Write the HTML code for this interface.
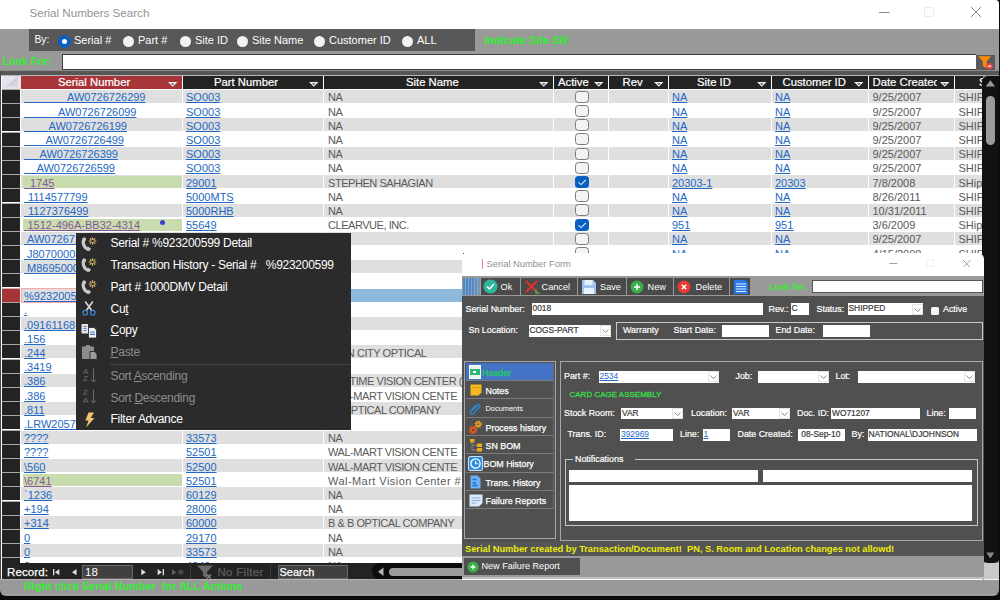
<!DOCTYPE html><html><head><meta charset="utf-8"><title>Serial Numbers Search</title><style>
html,body{margin:0;padding:0;}
body{width:1000px;height:600px;overflow:hidden;background:#0b0b0b;font-family:"Liberation Sans",sans-serif;position:relative;}
div,span,a{box-sizing:border-box;}
.a{position:absolute;}
.t{position:absolute;white-space:nowrap;}
#win{position:absolute;left:0;top:0;width:999.2px;height:595.5px;background:#999;border-radius:0 4px 6px 6px;overflow:hidden;}
#tbar{position:absolute;left:0;top:0;width:1000px;height:29px;background:#fff;}
.lnk{color:#2368c4;text-decoration:underline;}
.vis{color:#86589b;text-decoration:underline;}
.g{color:#5a5a5a;}
.cell{position:absolute;white-space:nowrap;font-size:11px;height:14.2px;line-height:14.2px;overflow:hidden;}
.hd{position:absolute;top:75.8px;height:12.9px;background:#232323;color:#fff;font-size:11.3px;line-height:13.6px;text-align:left;-webkit-text-stroke:0.2px #fff;white-space:nowrap;overflow:hidden;}
.hd i{position:absolute;right:3.5px;top:6.3px;width:10px;height:5px;line-height:0;display:block;}
.cb{position:absolute;width:13.500px;height:12px;border:1px solid #7a7a7a;border-radius:3.500px;background:#f3f3f3;}
.cbc{position:absolute;width:13.500px;height:12px;border-radius:3.500px;background:#0a60c0;}
.mi{position:absolute;left:110.5px;color:#fff;font-size:12px;letter-spacing:-0.28px;white-space:nowrap;height:22px;line-height:22px;}
.mi.d{color:#8c8c8c;}
.fl{position:absolute;color:#fff;-webkit-text-stroke:0.2px #fff;font-size:8.9px;white-space:nowrap;height:12px;line-height:12px;}
.fi{position:absolute;background:#fff;font-size:8.4px;color:#3a3a3a;-webkit-text-stroke:0.2px #3a3a3a;white-space:nowrap;overflow:hidden;padding-left:1px;}
.tab{position:absolute;left:465.5px;width:88px;height:18.35px;border-bottom:1px solid #7c7c7c;border-right:1px solid #6a6a6a;color:#fff;font-size:8.9px;-webkit-text-stroke:0.25px #fff;line-height:20.4px;white-space:nowrap;}
.tbtn{position:absolute;top:278px;height:17px;background:#4a4a4a;color:#fff;font-size:9.2px;line-height:18.500px;white-space:nowrap;}
</style></head><body>
<div id="win">
<div id="tbar"></div>
<div class="t" style="left:29.5px;top:5px;font-size:11.6px;line-height:16px;color:#929292;">Serial Numbers Search</div>
<svg class="a" style="left:870px;top:0" width="130" height="29" viewBox="0 0 130 29"><path d="M9 12.5h10.500" stroke="#8a8a8a" stroke-width="1" fill="none"/><rect x="54.5" y="7.5" width="9" height="9" rx="1" stroke="#ebebeb" fill="none"/><path d="M101 7l10 10M111 7l-10 10" stroke="#8a8a8a" stroke-width="1" fill="none"/></svg>
<div class="a" style="left:29px;top:29px;width:446px;height:22px;background:#585858;"></div>
<div class="t" style="left:34.500px;top:33px;font-size:10.300px;line-height:14px;color:#fff;">By:</div>
<div class="a" style="left:58px;top:34.500px;width:13px;height:13px;border-radius:6.500px;background:#fff;border:4px solid #0a5fc4;"></div>
<div class="t" style="left:74px;top:33px;font-size:11px;line-height:14px;color:#fff;">Serial #</div>
<div class="a" style="left:122.5px;top:35.5px;width:11px;height:11px;border-radius:6px;background:#f2f2f2;"></div>
<div class="t" style="left:138px;top:33px;font-size:11px;line-height:14px;color:#fff;">Part #</div>
<div class="a" style="left:179.5px;top:35.5px;width:11px;height:11px;border-radius:6px;background:#f2f2f2;"></div>
<div class="t" style="left:195px;top:33px;font-size:11px;line-height:14px;color:#fff;">Site ID</div>
<div class="a" style="left:236.5px;top:35.5px;width:11px;height:11px;border-radius:6px;background:#f2f2f2;"></div>
<div class="t" style="left:252px;top:33px;font-size:11px;line-height:14px;color:#fff;">Site Name</div>
<div class="a" style="left:313.5px;top:35.5px;width:11px;height:11px;border-radius:6px;background:#f2f2f2;"></div>
<div class="t" style="left:329px;top:33px;font-size:11px;line-height:14px;color:#fff;">Customer ID</div>
<div class="a" style="left:401.5px;top:35.5px;width:11px;height:11px;border-radius:6px;background:#f2f2f2;"></div>
<div class="t" style="left:417px;top:33px;font-size:11px;line-height:14px;color:#fff;">ALL</div>
<div class="t" style="left:484.5px;top:33px;font-size:11px;line-height:14px;color:#2ef02e;font-weight:bold;font-style:italic;">Indicate Site SN</div>
<div class="t" style="left:2.5px;top:53.5px;font-size:10.6px;line-height:15px;color:#33f033;font-weight:bold;">Look For:</div>
<div class="a" style="left:62px;top:54.4px;width:913.5px;height:15.6px;background:#fff;border:1px solid #3c3c3c;border-right:none;"></div>
<div class="a" style="left:976px;top:55px;width:19px;height:14.5px;background:#5a5a5a;"></div>
<svg class="a" style="left:976px;top:55px" width="19" height="15" viewBox="0 0 19 15"><path d="M2.300 1.300h13l-4.600 5v7l-3.800-2.300v-4.700z" fill="#fb8c04"/><circle cx="13.600" cy="11.200" r="3.100" fill="#ea4440"/><rect x="11.900" y="10.600" width="3.400" height="1.200" fill="#fff"/></svg>
<div class="a" style="left:0;top:70px;width:1000px;height:1px;background:#8c8c8c;"></div>
<div class="a" style="left:0;top:71px;width:1000px;height:3.5px;background:#575757;"></div>
<div class="a" style="left:0;top:71px;width:1.300px;height:508.500px;background:#484848;"></div>
<div class="a" style="left:1.300px;top:74.5px;width:981.700px;height:505px;background:#fff;border-top:1.3px solid #b4b4b4;"></div>
<div class="hd" style="left:21px;width:160.5px;background:#a63439;"><span style="position:absolute;left:37px;top:0;">Serial Number</span><i><svg width="10" height="5" viewBox="0 0 10 5"><path d="M0 0h9.500l-4.750 4.700z" fill="#f0f0f0"/><path d="M3 1.400h3.500l-1.750 1.700z" fill="#2a2a2a"/></svg></i></div>
<div class="hd" style="left:183px;width:139.5px;background:#232323;"><span style="position:absolute;left:31px;top:0;">Part Number</span><i><svg width="10" height="5" viewBox="0 0 10 5"><path d="M0 0h9.500l-4.750 4.700z" fill="#f0f0f0"/><path d="M3 1.400h3.500l-1.750 1.700z" fill="#2a2a2a"/></svg></i></div>
<div class="hd" style="left:324px;width:228.5px;background:#232323;"><span style="position:absolute;left:82px;top:0;">Site Name</span><i><svg width="10" height="5" viewBox="0 0 10 5"><path d="M0 0h9.500l-4.750 4.700z" fill="#f0f0f0"/><path d="M3 1.400h3.500l-1.750 1.700z" fill="#2a2a2a"/></svg></i></div>
<div class="hd" style="left:554px;width:53.5px;background:#232323;"><span style="position:absolute;left:4px;top:0;">Active</span><i><svg width="10" height="5" viewBox="0 0 10 5"><path d="M0 0h9.500l-4.750 4.700z" fill="#f0f0f0"/><path d="M3 1.400h3.500l-1.750 1.700z" fill="#2a2a2a"/></svg></i></div>
<div class="hd" style="left:609px;width:58.5px;background:#232323;"><span style="position:absolute;left:13.5px;top:0;">Rev</span><i><svg width="10" height="5" viewBox="0 0 10 5"><path d="M0 0h9.500l-4.750 4.700z" fill="#f0f0f0"/><path d="M3 1.400h3.500l-1.750 1.700z" fill="#2a2a2a"/></svg></i></div>
<div class="hd" style="left:669px;width:101.5px;background:#232323;"><span style="position:absolute;left:28px;top:0;">Site ID</span><i><svg width="10" height="5" viewBox="0 0 10 5"><path d="M0 0h9.500l-4.750 4.700z" fill="#f0f0f0"/><path d="M3 1.400h3.500l-1.750 1.700z" fill="#2a2a2a"/></svg></i></div>
<div class="hd" style="left:772px;width:95.5px;background:#232323;"><span style="position:absolute;left:10.5px;top:0;">Customer ID</span><i><svg width="10" height="5" viewBox="0 0 10 5"><path d="M0 0h9.500l-4.750 4.700z" fill="#f0f0f0"/><path d="M3 1.400h3.500l-1.750 1.700z" fill="#2a2a2a"/></svg></i></div>
<div class="hd" style="left:869px;width:84.5px;background:#232323;"><span style="position:absolute;left:3.5px;top:0;width:64.5px;overflow:hidden;">Date Created</span><i><svg width="10" height="5" viewBox="0 0 10 5"><path d="M0 0h9.500l-4.750 4.700z" fill="#f0f0f0"/><path d="M3 1.400h3.500l-1.750 1.700z" fill="#2a2a2a"/></svg></i></div>
<div class="hd" style="left:955px;width:27.5px;background:#232323;"><span style="position:absolute;left:24px;top:0;">Status</span></div>
<div class="a" style="left:1.5px;top:75.8px;width:19px;height:12.9px;background:#e4e4ea;"></div>
<svg class="a" style="left:2px;top:75.8px" width="18" height="13" viewBox="0 0 18 13"><path d="M15.500 1.500v9h-10z" fill="#d4d4da"/><path d="M4.500 11l11.500-10" stroke="#b4c6e4" stroke-width="1" fill="none"/></svg>
<div class="a" style="left:21px;top:90.00px;width:161px;height:13.00px;background:#dfdfdf;"></div>
<div class="a" style="left:183px;top:90.00px;width:140px;height:13.00px;background:#dfdfdf;"></div>
<div class="a" style="left:324px;top:90.00px;width:229px;height:13.00px;background:#dfdfdf;"></div>
<div class="a" style="left:554px;top:90.00px;width:54px;height:13.00px;background:#dfdfdf;"></div>
<div class="a" style="left:609px;top:90.00px;width:59px;height:13.00px;background:#dfdfdf;"></div>
<div class="a" style="left:669px;top:90.00px;width:102px;height:13.00px;background:#dfdfdf;"></div>
<div class="a" style="left:772px;top:90.00px;width:96px;height:13.00px;background:#dfdfdf;"></div>
<div class="a" style="left:869px;top:90.00px;width:85px;height:13.00px;background:#dfdfdf;"></div>
<div class="a" style="left:955px;top:90.00px;width:27px;height:13.00px;background:#dfdfdf;"></div>
<div class="a" style="left:2px;top:89.00px;width:18.3px;height:14.20px;background:#232323;border-top:1px solid #a8a8a8;"></div>
<div class="cell" style="left:24px;top:90.30px;width:157px;"><span class="lnk"><span style="letter-spacing:39.94px;">&nbsp;</span>AW0726726299</span></div>
<div class="cell" style="left:186px;top:90.30px;width:136px;"><span class="lnk">SO003</span></div>
<div class="cell g" style="left:328px;top:90.30px;width:224px;letter-spacing:-0.45px;">NA</div>
<div class="cb" style="left:575.2px;top:90.80px;"></div>
<div class="cell" style="left:672px;top:90.30px;width:98px;"><span class="lnk">NA</span></div>
<div class="cell" style="left:775px;top:90.30px;width:92px;"><span class="lnk">NA</span></div>
<div class="cell g" style="left:872.5px;top:90.30px;width:81px;">9/25/2007</div>
<div class="cell g" style="left:958.5px;top:90.30px;width:24px;">SHIP</div>
<div class="a" style="left:21px;top:104.00px;width:161px;height:13.00px;background:#fff;"></div>
<div class="a" style="left:183px;top:104.00px;width:140px;height:13.00px;background:#fff;"></div>
<div class="a" style="left:324px;top:104.00px;width:229px;height:13.00px;background:#fff;"></div>
<div class="a" style="left:554px;top:104.00px;width:54px;height:13.00px;background:#fff;"></div>
<div class="a" style="left:609px;top:104.00px;width:59px;height:13.00px;background:#fff;"></div>
<div class="a" style="left:669px;top:104.00px;width:102px;height:13.00px;background:#fff;"></div>
<div class="a" style="left:772px;top:104.00px;width:96px;height:13.00px;background:#fff;"></div>
<div class="a" style="left:869px;top:104.00px;width:85px;height:13.00px;background:#fff;"></div>
<div class="a" style="left:955px;top:104.00px;width:27px;height:13.00px;background:#fff;"></div>
<div class="a" style="left:2px;top:103.00px;width:18.3px;height:14.20px;background:#232323;border-top:1px solid #a8a8a8;"></div>
<div class="cell" style="left:24px;top:104.50px;width:157px;"><span class="lnk"><span style="letter-spacing:30.94px;">&nbsp;</span>AW0726726099</span></div>
<div class="cell" style="left:186px;top:104.50px;width:136px;"><span class="lnk">SO003</span></div>
<div class="cell g" style="left:328px;top:104.50px;width:224px;letter-spacing:-0.45px;">NA</div>
<div class="cb" style="left:575.2px;top:105.00px;"></div>
<div class="cell" style="left:672px;top:104.50px;width:98px;"><span class="lnk">NA</span></div>
<div class="cell" style="left:775px;top:104.50px;width:92px;"><span class="lnk">NA</span></div>
<div class="cell g" style="left:872.5px;top:104.50px;width:81px;">9/25/2007</div>
<div class="cell g" style="left:958.5px;top:104.50px;width:24px;">SHIP</div>
<div class="a" style="left:21px;top:118.00px;width:161px;height:13.00px;background:#dfdfdf;"></div>
<div class="a" style="left:183px;top:118.00px;width:140px;height:13.00px;background:#dfdfdf;"></div>
<div class="a" style="left:324px;top:118.00px;width:229px;height:13.00px;background:#dfdfdf;"></div>
<div class="a" style="left:554px;top:118.00px;width:54px;height:13.00px;background:#dfdfdf;"></div>
<div class="a" style="left:609px;top:118.00px;width:59px;height:13.00px;background:#dfdfdf;"></div>
<div class="a" style="left:669px;top:118.00px;width:102px;height:13.00px;background:#dfdfdf;"></div>
<div class="a" style="left:772px;top:118.00px;width:96px;height:13.00px;background:#dfdfdf;"></div>
<div class="a" style="left:869px;top:118.00px;width:85px;height:13.00px;background:#dfdfdf;"></div>
<div class="a" style="left:955px;top:118.00px;width:27px;height:13.00px;background:#dfdfdf;"></div>
<div class="a" style="left:2px;top:117.00px;width:18.3px;height:14.20px;background:#232323;border-top:1px solid #a8a8a8;"></div>
<div class="cell" style="left:24px;top:118.70px;width:157px;"><span class="lnk"><span style="letter-spacing:21.44px;">&nbsp;</span>AW0726726199</span></div>
<div class="cell" style="left:186px;top:118.70px;width:136px;"><span class="lnk">SO003</span></div>
<div class="cell g" style="left:328px;top:118.70px;width:224px;letter-spacing:-0.45px;">NA</div>
<div class="cb" style="left:575.2px;top:119.20px;"></div>
<div class="cell" style="left:672px;top:118.70px;width:98px;"><span class="lnk">NA</span></div>
<div class="cell" style="left:775px;top:118.70px;width:92px;"><span class="lnk">NA</span></div>
<div class="cell g" style="left:872.5px;top:118.70px;width:81px;">9/25/2007</div>
<div class="cell g" style="left:958.5px;top:118.70px;width:24px;">SHIP</div>
<div class="a" style="left:21px;top:133.00px;width:161px;height:13.00px;background:#fff;"></div>
<div class="a" style="left:183px;top:133.00px;width:140px;height:13.00px;background:#fff;"></div>
<div class="a" style="left:324px;top:133.00px;width:229px;height:13.00px;background:#fff;"></div>
<div class="a" style="left:554px;top:133.00px;width:54px;height:13.00px;background:#fff;"></div>
<div class="a" style="left:609px;top:133.00px;width:59px;height:13.00px;background:#fff;"></div>
<div class="a" style="left:669px;top:133.00px;width:102px;height:13.00px;background:#fff;"></div>
<div class="a" style="left:772px;top:133.00px;width:96px;height:13.00px;background:#fff;"></div>
<div class="a" style="left:869px;top:133.00px;width:85px;height:13.00px;background:#fff;"></div>
<div class="a" style="left:955px;top:133.00px;width:27px;height:13.00px;background:#fff;"></div>
<div class="a" style="left:2px;top:132.00px;width:18.3px;height:14.20px;background:#232323;border-top:1px solid #a8a8a8;"></div>
<div class="cell" style="left:24px;top:132.90px;width:157px;"><span class="lnk"><span style="letter-spacing:18.44px;">&nbsp;</span>AW0726726499</span></div>
<div class="cell" style="left:186px;top:132.90px;width:136px;"><span class="lnk">SO003</span></div>
<div class="cell g" style="left:328px;top:132.90px;width:224px;letter-spacing:-0.45px;">NA</div>
<div class="cb" style="left:575.2px;top:133.40px;"></div>
<div class="cell" style="left:672px;top:132.90px;width:98px;"><span class="lnk">NA</span></div>
<div class="cell" style="left:775px;top:132.90px;width:92px;"><span class="lnk">NA</span></div>
<div class="cell g" style="left:872.5px;top:132.90px;width:81px;">9/25/2007</div>
<div class="cell g" style="left:958.5px;top:132.90px;width:24px;">SHIP</div>
<div class="a" style="left:21px;top:147.00px;width:161px;height:13.00px;background:#dfdfdf;"></div>
<div class="a" style="left:183px;top:147.00px;width:140px;height:13.00px;background:#dfdfdf;"></div>
<div class="a" style="left:324px;top:147.00px;width:229px;height:13.00px;background:#dfdfdf;"></div>
<div class="a" style="left:554px;top:147.00px;width:54px;height:13.00px;background:#dfdfdf;"></div>
<div class="a" style="left:609px;top:147.00px;width:59px;height:13.00px;background:#dfdfdf;"></div>
<div class="a" style="left:669px;top:147.00px;width:102px;height:13.00px;background:#dfdfdf;"></div>
<div class="a" style="left:772px;top:147.00px;width:96px;height:13.00px;background:#dfdfdf;"></div>
<div class="a" style="left:869px;top:147.00px;width:85px;height:13.00px;background:#dfdfdf;"></div>
<div class="a" style="left:955px;top:147.00px;width:27px;height:13.00px;background:#dfdfdf;"></div>
<div class="a" style="left:2px;top:146.00px;width:18.3px;height:14.20px;background:#232323;border-top:1px solid #a8a8a8;"></div>
<div class="cell" style="left:24px;top:147.10px;width:157px;"><span class="lnk"><span style="letter-spacing:12.44px;">&nbsp;</span>AW0726726399</span></div>
<div class="cell" style="left:186px;top:147.10px;width:136px;"><span class="lnk">SO003</span></div>
<div class="cell g" style="left:328px;top:147.10px;width:224px;letter-spacing:-0.45px;">NA</div>
<div class="cb" style="left:575.2px;top:147.60px;"></div>
<div class="cell" style="left:672px;top:147.10px;width:98px;"><span class="lnk">NA</span></div>
<div class="cell" style="left:775px;top:147.10px;width:92px;"><span class="lnk">NA</span></div>
<div class="cell g" style="left:872.5px;top:147.10px;width:81px;">9/25/2007</div>
<div class="cell g" style="left:958.5px;top:147.10px;width:24px;">SHIP</div>
<div class="a" style="left:21px;top:161.00px;width:161px;height:13.00px;background:#fff;"></div>
<div class="a" style="left:183px;top:161.00px;width:140px;height:13.00px;background:#fff;"></div>
<div class="a" style="left:324px;top:161.00px;width:229px;height:13.00px;background:#fff;"></div>
<div class="a" style="left:554px;top:161.00px;width:54px;height:13.00px;background:#fff;"></div>
<div class="a" style="left:609px;top:161.00px;width:59px;height:13.00px;background:#fff;"></div>
<div class="a" style="left:669px;top:161.00px;width:102px;height:13.00px;background:#fff;"></div>
<div class="a" style="left:772px;top:161.00px;width:96px;height:13.00px;background:#fff;"></div>
<div class="a" style="left:869px;top:161.00px;width:85px;height:13.00px;background:#fff;"></div>
<div class="a" style="left:955px;top:161.00px;width:27px;height:13.00px;background:#fff;"></div>
<div class="a" style="left:2px;top:160.00px;width:18.3px;height:14.20px;background:#232323;border-top:1px solid #a8a8a8;"></div>
<div class="cell" style="left:24px;top:161.30px;width:157px;"><span class="lnk"><span style="letter-spacing:9.44px;">&nbsp;</span>AW0726726599</span></div>
<div class="cell" style="left:186px;top:161.30px;width:136px;"><span class="lnk">SO003</span></div>
<div class="cell g" style="left:328px;top:161.30px;width:224px;letter-spacing:-0.45px;">NA</div>
<div class="cb" style="left:575.2px;top:161.80px;"></div>
<div class="cell" style="left:672px;top:161.30px;width:98px;"><span class="lnk">NA</span></div>
<div class="cell" style="left:775px;top:161.30px;width:92px;"><span class="lnk">NA</span></div>
<div class="cell g" style="left:872.5px;top:161.30px;width:81px;">9/25/2007</div>
<div class="cell g" style="left:958.5px;top:161.30px;width:24px;">SHIP</div>
<div class="a" style="left:21px;top:175.00px;width:161px;height:13.00px;background:#dfdfdf;"></div>
<div class="a" style="left:23px;top:175.50px;width:159px;height:12.00px;background:#c9dcae;"></div>
<div class="a" style="left:183px;top:175.00px;width:140px;height:13.00px;background:#dfdfdf;"></div>
<div class="a" style="left:324px;top:175.00px;width:229px;height:13.00px;background:#dfdfdf;"></div>
<div class="a" style="left:554px;top:175.00px;width:54px;height:13.00px;background:#dfdfdf;"></div>
<div class="a" style="left:609px;top:175.00px;width:59px;height:13.00px;background:#dfdfdf;"></div>
<div class="a" style="left:669px;top:175.00px;width:102px;height:13.00px;background:#dfdfdf;"></div>
<div class="a" style="left:772px;top:175.00px;width:96px;height:13.00px;background:#dfdfdf;"></div>
<div class="a" style="left:869px;top:175.00px;width:85px;height:13.00px;background:#dfdfdf;"></div>
<div class="a" style="left:955px;top:175.00px;width:27px;height:13.00px;background:#dfdfdf;"></div>
<div class="a" style="left:2px;top:174.00px;width:18.3px;height:14.20px;background:#232323;border-top:1px solid #a8a8a8;"></div>
<div class="cell" style="left:24px;top:175.50px;width:157px;"><span class="vis"><span style="letter-spacing:2.94px;">&nbsp;</span>1745</span></div>
<div class="cell" style="left:186px;top:175.50px;width:136px;"><span class="lnk">29001</span></div>
<div class="cell g" style="left:328px;top:175.50px;width:224px;letter-spacing:-0.45px;">STEPHEN SAHAGIAN</div>
<div class="cbc" style="left:575.2px;top:176.00px;"></div><svg class="a" style="left:575.2px;top:176.00px" width="14" height="12" viewBox="0 0 14 12"><path d="M3.500 6.300l2.600 2.300l4.600-4.600" stroke="#d4e6f8" stroke-width="1.100" fill="none"/></svg>
<div class="cell" style="left:672px;top:175.50px;width:98px;"><span class="lnk">20303-1</span></div>
<div class="cell" style="left:775px;top:175.50px;width:92px;"><span class="lnk">20303</span></div>
<div class="cell g" style="left:872.5px;top:175.50px;width:81px;">7/8/2008</div>
<div class="cell g" style="left:958.5px;top:175.50px;width:24px;">SHip</div>
<div class="a" style="left:21px;top:189.00px;width:161px;height:13.00px;background:#fff;"></div>
<div class="a" style="left:183px;top:189.00px;width:140px;height:13.00px;background:#fff;"></div>
<div class="a" style="left:324px;top:189.00px;width:229px;height:13.00px;background:#fff;"></div>
<div class="a" style="left:554px;top:189.00px;width:54px;height:13.00px;background:#fff;"></div>
<div class="a" style="left:609px;top:189.00px;width:59px;height:13.00px;background:#fff;"></div>
<div class="a" style="left:669px;top:189.00px;width:102px;height:13.00px;background:#fff;"></div>
<div class="a" style="left:772px;top:189.00px;width:96px;height:13.00px;background:#fff;"></div>
<div class="a" style="left:869px;top:189.00px;width:85px;height:13.00px;background:#fff;"></div>
<div class="a" style="left:955px;top:189.00px;width:27px;height:13.00px;background:#fff;"></div>
<div class="a" style="left:2px;top:188.00px;width:18.3px;height:14.20px;background:#232323;border-top:1px solid #a8a8a8;"></div>
<div class="cell" style="left:24px;top:189.70px;width:157px;"><span class="lnk"><span style="letter-spacing:0.94px;">&nbsp;</span>1114577799</span></div>
<div class="cell" style="left:186px;top:189.70px;width:136px;"><span class="lnk">5000MTS</span></div>
<div class="cell g" style="left:328px;top:189.70px;width:224px;letter-spacing:-0.45px;">NA</div>
<div class="cb" style="left:575.2px;top:190.20px;"></div>
<div class="cell" style="left:672px;top:189.70px;width:98px;"><span class="lnk">NA</span></div>
<div class="cell" style="left:775px;top:189.70px;width:92px;"><span class="lnk">NA</span></div>
<div class="cell g" style="left:872.5px;top:189.70px;width:81px;">8/26/2011</div>
<div class="cell g" style="left:958.5px;top:189.70px;width:24px;">SHIP</div>
<div class="a" style="left:21px;top:204.00px;width:161px;height:13.00px;background:#dfdfdf;"></div>
<div class="a" style="left:183px;top:204.00px;width:140px;height:13.00px;background:#dfdfdf;"></div>
<div class="a" style="left:324px;top:204.00px;width:229px;height:13.00px;background:#dfdfdf;"></div>
<div class="a" style="left:554px;top:204.00px;width:54px;height:13.00px;background:#dfdfdf;"></div>
<div class="a" style="left:609px;top:204.00px;width:59px;height:13.00px;background:#dfdfdf;"></div>
<div class="a" style="left:669px;top:204.00px;width:102px;height:13.00px;background:#dfdfdf;"></div>
<div class="a" style="left:772px;top:204.00px;width:96px;height:13.00px;background:#dfdfdf;"></div>
<div class="a" style="left:869px;top:204.00px;width:85px;height:13.00px;background:#dfdfdf;"></div>
<div class="a" style="left:955px;top:204.00px;width:27px;height:13.00px;background:#dfdfdf;"></div>
<div class="a" style="left:2px;top:203.00px;width:18.3px;height:14.20px;background:#232323;border-top:1px solid #a8a8a8;"></div>
<div class="cell" style="left:24px;top:203.90px;width:157px;"><span class="lnk"><span style="letter-spacing:0.94px;">&nbsp;</span>1127376499</span></div>
<div class="cell" style="left:186px;top:203.90px;width:136px;"><span class="lnk">5000RHB</span></div>
<div class="cell g" style="left:328px;top:203.90px;width:224px;letter-spacing:-0.45px;">NA</div>
<div class="cb" style="left:575.2px;top:204.40px;"></div>
<div class="cell" style="left:672px;top:203.90px;width:98px;"><span class="lnk">NA</span></div>
<div class="cell" style="left:775px;top:203.90px;width:92px;"><span class="lnk">NA</span></div>
<div class="cell g" style="left:872.5px;top:203.90px;width:81px;">10/31/2011</div>
<div class="cell g" style="left:958.5px;top:203.90px;width:24px;">SHIP</div>
<div class="a" style="left:21px;top:218.00px;width:161px;height:13.00px;background:#fff;"></div>
<div class="a" style="left:23px;top:218.50px;width:159px;height:12.00px;background:#c9dcae;"></div>
<div class="a" style="left:183px;top:218.00px;width:140px;height:13.00px;background:#fff;"></div>
<div class="a" style="left:324px;top:218.00px;width:229px;height:13.00px;background:#fff;"></div>
<div class="a" style="left:554px;top:218.00px;width:54px;height:13.00px;background:#fff;"></div>
<div class="a" style="left:609px;top:218.00px;width:59px;height:13.00px;background:#fff;"></div>
<div class="a" style="left:669px;top:218.00px;width:102px;height:13.00px;background:#fff;"></div>
<div class="a" style="left:772px;top:218.00px;width:96px;height:13.00px;background:#fff;"></div>
<div class="a" style="left:869px;top:218.00px;width:85px;height:13.00px;background:#fff;"></div>
<div class="a" style="left:955px;top:218.00px;width:27px;height:13.00px;background:#fff;"></div>
<div class="a" style="left:2px;top:217.00px;width:18.3px;height:14.20px;background:#232323;border-top:1px solid #a8a8a8;"></div>
<div class="cell" style="left:24px;top:218.10px;width:157px;"><span class="vis"><span style="letter-spacing:0.44px;">&nbsp;</span>1512-496A-BB32-4314</span></div>
<div class="cell" style="left:186px;top:218.10px;width:136px;"><span class="lnk">55649</span></div>
<div class="cell g" style="left:328px;top:218.10px;width:224px;letter-spacing:-0.45px;">CLEARVUE, INC.</div>
<div class="cbc" style="left:575.2px;top:218.60px;"></div><svg class="a" style="left:575.2px;top:218.60px" width="14" height="12" viewBox="0 0 14 12"><path d="M3.500 6.300l2.600 2.300l4.600-4.600" stroke="#d4e6f8" stroke-width="1.100" fill="none"/></svg>
<div class="cell" style="left:672px;top:218.10px;width:98px;"><span class="lnk">951</span></div>
<div class="cell" style="left:775px;top:218.10px;width:92px;"><span class="lnk">951</span></div>
<div class="cell g" style="left:872.5px;top:218.10px;width:81px;">3/6/2009</div>
<div class="cell g" style="left:958.5px;top:218.10px;width:24px;">SHip</div>
<div class="a" style="left:21px;top:232.00px;width:161px;height:13.00px;background:#dfdfdf;"></div>
<div class="a" style="left:183px;top:232.00px;width:140px;height:13.00px;background:#dfdfdf;"></div>
<div class="a" style="left:324px;top:232.00px;width:229px;height:13.00px;background:#dfdfdf;"></div>
<div class="a" style="left:554px;top:232.00px;width:54px;height:13.00px;background:#dfdfdf;"></div>
<div class="a" style="left:609px;top:232.00px;width:59px;height:13.00px;background:#dfdfdf;"></div>
<div class="a" style="left:669px;top:232.00px;width:102px;height:13.00px;background:#dfdfdf;"></div>
<div class="a" style="left:772px;top:232.00px;width:96px;height:13.00px;background:#dfdfdf;"></div>
<div class="a" style="left:869px;top:232.00px;width:85px;height:13.00px;background:#dfdfdf;"></div>
<div class="a" style="left:955px;top:232.00px;width:27px;height:13.00px;background:#dfdfdf;"></div>
<div class="a" style="left:2px;top:231.00px;width:18.3px;height:14.20px;background:#232323;border-top:1px solid #a8a8a8;"></div>
<div class="cell" style="left:24px;top:232.30px;width:157px;"><span class="lnk"><span style="letter-spacing:-0.06px;">&nbsp;</span>AW0726726699</span></div>
<div class="cell" style="left:186px;top:232.30px;width:136px;"><span class="lnk">SO003</span></div>
<div class="cell g" style="left:328px;top:232.30px;width:224px;letter-spacing:-0.45px;">NA</div>
<div class="cb" style="left:575.2px;top:232.80px;"></div>
<div class="cell" style="left:672px;top:232.30px;width:98px;"><span class="lnk">NA</span></div>
<div class="cell" style="left:775px;top:232.30px;width:92px;"><span class="lnk">NA</span></div>
<div class="cell g" style="left:872.5px;top:232.30px;width:81px;">9/25/2007</div>
<div class="cell g" style="left:958.5px;top:232.30px;width:24px;">SHIP</div>
<div class="a" style="left:21px;top:246.00px;width:161px;height:13.00px;background:#fff;"></div>
<div class="a" style="left:183px;top:246.00px;width:140px;height:13.00px;background:#fff;"></div>
<div class="a" style="left:324px;top:246.00px;width:229px;height:13.00px;background:#fff;"></div>
<div class="a" style="left:554px;top:246.00px;width:54px;height:13.00px;background:#fff;"></div>
<div class="a" style="left:609px;top:246.00px;width:59px;height:13.00px;background:#fff;"></div>
<div class="a" style="left:669px;top:246.00px;width:102px;height:13.00px;background:#fff;"></div>
<div class="a" style="left:772px;top:246.00px;width:96px;height:13.00px;background:#fff;"></div>
<div class="a" style="left:869px;top:246.00px;width:85px;height:13.00px;background:#fff;"></div>
<div class="a" style="left:955px;top:246.00px;width:27px;height:13.00px;background:#fff;"></div>
<div class="a" style="left:2px;top:245.00px;width:18.3px;height:14.20px;background:#232323;border-top:1px solid #a8a8a8;"></div>
<div class="cell" style="left:24px;top:246.50px;width:157px;"><span class="lnk"><span style="letter-spacing:-0.06px;">&nbsp;</span>J80700008</span></div>
<div class="cell" style="left:186px;top:246.50px;width:136px;"><span class="lnk">5000MTS</span></div>
<div class="cell g" style="left:328px;top:246.50px;width:224px;letter-spacing:-0.45px;">NA</div>
<div class="cb" style="left:575.2px;top:247.00px;"></div>
<div class="cell" style="left:672px;top:246.50px;width:98px;"><span class="lnk">NA</span></div>
<div class="cell" style="left:775px;top:246.50px;width:92px;"><span class="lnk">NA</span></div>
<div class="cell g" style="left:872.5px;top:246.50px;width:81px;">4/15/2008</div>
<div class="cell g" style="left:958.5px;top:246.50px;width:24px;">SHIP</div>
<div class="a" style="left:21px;top:260.00px;width:161px;height:13.00px;background:#dfdfdf;"></div>
<div class="a" style="left:183px;top:260.00px;width:140px;height:13.00px;background:#dfdfdf;"></div>
<div class="a" style="left:324px;top:260.00px;width:229px;height:13.00px;background:#dfdfdf;"></div>
<div class="a" style="left:554px;top:260.00px;width:54px;height:13.00px;background:#dfdfdf;"></div>
<div class="a" style="left:609px;top:260.00px;width:59px;height:13.00px;background:#dfdfdf;"></div>
<div class="a" style="left:669px;top:260.00px;width:102px;height:13.00px;background:#dfdfdf;"></div>
<div class="a" style="left:772px;top:260.00px;width:96px;height:13.00px;background:#dfdfdf;"></div>
<div class="a" style="left:869px;top:260.00px;width:85px;height:13.00px;background:#dfdfdf;"></div>
<div class="a" style="left:955px;top:260.00px;width:27px;height:13.00px;background:#dfdfdf;"></div>
<div class="a" style="left:2px;top:259.00px;width:18.3px;height:14.20px;background:#232323;border-top:1px solid #a8a8a8;"></div>
<div class="cell" style="left:24px;top:260.70px;width:157px;"><span class="lnk"><span style="letter-spacing:-0.06px;">&nbsp;</span>M86950008</span></div>
<div class="cell" style="left:186px;top:260.70px;width:136px;"><span class="lnk">5000MTS</span></div>
<div class="cell g" style="left:328px;top:260.70px;width:224px;letter-spacing:-0.45px;">NA</div>
<div class="cb" style="left:575.2px;top:261.20px;"></div>
<div class="cell" style="left:672px;top:260.70px;width:98px;"><span class="lnk">NA</span></div>
<div class="cell" style="left:775px;top:260.70px;width:92px;"><span class="lnk">NA</span></div>
<div class="cell g" style="left:872.5px;top:260.70px;width:81px;">4/15/2008</div>
<div class="cell g" style="left:958.5px;top:260.70px;width:24px;">SHIP</div>
<div class="a" style="left:21px;top:274.00px;width:161px;height:13.00px;background:#fff;"></div>
<div class="a" style="left:183px;top:274.00px;width:140px;height:13.00px;background:#fff;"></div>
<div class="a" style="left:324px;top:274.00px;width:229px;height:13.00px;background:#fff;"></div>
<div class="a" style="left:554px;top:274.00px;width:54px;height:13.00px;background:#fff;"></div>
<div class="a" style="left:609px;top:274.00px;width:59px;height:13.00px;background:#fff;"></div>
<div class="a" style="left:669px;top:274.00px;width:102px;height:13.00px;background:#fff;"></div>
<div class="a" style="left:772px;top:274.00px;width:96px;height:13.00px;background:#fff;"></div>
<div class="a" style="left:869px;top:274.00px;width:85px;height:13.00px;background:#fff;"></div>
<div class="a" style="left:955px;top:274.00px;width:27px;height:13.00px;background:#fff;"></div>
<div class="a" style="left:2px;top:273.00px;width:18.3px;height:14.20px;background:#232323;border-top:1px solid #a8a8a8;"></div>
<div class="a" style="left:21px;top:289.00px;width:161px;height:13.00px;background:#dfdfdf;"></div>
<div class="a" style="left:183px;top:289.00px;width:140px;height:13.00px;background:#8fb9dc;"></div>
<div class="a" style="left:324px;top:289.00px;width:229px;height:13.00px;background:#8fb9dc;"></div>
<div class="a" style="left:554px;top:289.00px;width:54px;height:13.00px;background:#8fb9dc;"></div>
<div class="a" style="left:609px;top:289.00px;width:59px;height:13.00px;background:#8fb9dc;"></div>
<div class="a" style="left:669px;top:289.00px;width:102px;height:13.00px;background:#8fb9dc;"></div>
<div class="a" style="left:772px;top:289.00px;width:96px;height:13.00px;background:#8fb9dc;"></div>
<div class="a" style="left:869px;top:289.00px;width:85px;height:13.00px;background:#8fb9dc;"></div>
<div class="a" style="left:955px;top:289.00px;width:27px;height:13.00px;background:#8fb9dc;"></div>
<div class="a" style="left:2px;top:288.00px;width:18.3px;height:14.20px;background:#a63439;border-top:1px solid #d8b0b0;"></div>
<div class="cell" style="left:24px;top:289.10px;width:157px;"><span class="lnk"><span style="letter-spacing:-3.06px;">&nbsp;</span>%923200599</span></div>
<div class="cell" style="left:186px;top:289.10px;width:136px;"><span class="lnk">1000DMV</span></div>
<div class="cell g" style="left:328px;top:289.10px;width:224px;letter-spacing:-0.45px;">NA</div>
<div class="cb" style="left:575.2px;top:289.60px;"></div>
<div class="cell" style="left:672px;top:289.10px;width:98px;"><span class="lnk">NA</span></div>
<div class="cell" style="left:775px;top:289.10px;width:92px;"><span class="lnk">NA</span></div>
<div class="cell g" style="left:872.5px;top:289.10px;width:81px;">4/15/2008</div>
<div class="cell g" style="left:958.5px;top:289.10px;width:24px;">SHIP</div>
<div class="a" style="left:21px;top:303.00px;width:161px;height:13.00px;background:#fff;"></div>
<div class="a" style="left:183px;top:303.00px;width:140px;height:13.00px;background:#fff;"></div>
<div class="a" style="left:324px;top:303.00px;width:229px;height:13.00px;background:#fff;"></div>
<div class="a" style="left:554px;top:303.00px;width:54px;height:13.00px;background:#fff;"></div>
<div class="a" style="left:609px;top:303.00px;width:59px;height:13.00px;background:#fff;"></div>
<div class="a" style="left:669px;top:303.00px;width:102px;height:13.00px;background:#fff;"></div>
<div class="a" style="left:772px;top:303.00px;width:96px;height:13.00px;background:#fff;"></div>
<div class="a" style="left:869px;top:303.00px;width:85px;height:13.00px;background:#fff;"></div>
<div class="a" style="left:955px;top:303.00px;width:27px;height:13.00px;background:#fff;"></div>
<div class="a" style="left:2px;top:302.00px;width:18.3px;height:14.20px;background:#232323;border-top:1px solid #a8a8a8;"></div>
<div class="cell" style="left:24px;top:303.30px;width:157px;"><span class="lnk"><span style="letter-spacing:-3.06px;">&nbsp;</span>.</span></div>
<div class="cell" style="left:186px;top:303.30px;width:136px;"><span class="lnk">28006</span></div>
<div class="cell g" style="left:328px;top:303.30px;width:224px;letter-spacing:-0.45px;">NA</div>
<div class="cb" style="left:575.2px;top:303.80px;"></div>
<div class="cell" style="left:672px;top:303.30px;width:98px;"><span class="lnk">NA</span></div>
<div class="cell" style="left:775px;top:303.30px;width:92px;"><span class="lnk">NA</span></div>
<div class="cell g" style="left:958.5px;top:303.30px;width:24px;">SHIP</div>
<div class="a" style="left:21px;top:317.00px;width:161px;height:13.00px;background:#dfdfdf;"></div>
<div class="a" style="left:183px;top:317.00px;width:140px;height:13.00px;background:#dfdfdf;"></div>
<div class="a" style="left:324px;top:317.00px;width:229px;height:13.00px;background:#dfdfdf;"></div>
<div class="a" style="left:554px;top:317.00px;width:54px;height:13.00px;background:#dfdfdf;"></div>
<div class="a" style="left:609px;top:317.00px;width:59px;height:13.00px;background:#dfdfdf;"></div>
<div class="a" style="left:669px;top:317.00px;width:102px;height:13.00px;background:#dfdfdf;"></div>
<div class="a" style="left:772px;top:317.00px;width:96px;height:13.00px;background:#dfdfdf;"></div>
<div class="a" style="left:869px;top:317.00px;width:85px;height:13.00px;background:#dfdfdf;"></div>
<div class="a" style="left:955px;top:317.00px;width:27px;height:13.00px;background:#dfdfdf;"></div>
<div class="a" style="left:2px;top:316.00px;width:18.3px;height:14.20px;background:#232323;border-top:1px solid #a8a8a8;"></div>
<div class="cell" style="left:24px;top:317.50px;width:157px;"><span class="lnk"><span style="letter-spacing:-3.06px;">&nbsp;</span>.09161168</span></div>
<div class="cell" style="left:186px;top:317.50px;width:136px;"><span class="lnk">28006</span></div>
<div class="cell g" style="left:328px;top:317.50px;width:224px;letter-spacing:-0.45px;">NA</div>
<div class="cb" style="left:575.2px;top:318.00px;"></div>
<div class="cell" style="left:672px;top:317.50px;width:98px;"><span class="lnk">NA</span></div>
<div class="cell" style="left:775px;top:317.50px;width:92px;"><span class="lnk">NA</span></div>
<div class="cell g" style="left:958.5px;top:317.50px;width:24px;">SHIP</div>
<div class="a" style="left:21px;top:331.00px;width:161px;height:13.00px;background:#fff;"></div>
<div class="a" style="left:183px;top:331.00px;width:140px;height:13.00px;background:#fff;"></div>
<div class="a" style="left:324px;top:331.00px;width:229px;height:13.00px;background:#fff;"></div>
<div class="a" style="left:554px;top:331.00px;width:54px;height:13.00px;background:#fff;"></div>
<div class="a" style="left:609px;top:331.00px;width:59px;height:13.00px;background:#fff;"></div>
<div class="a" style="left:669px;top:331.00px;width:102px;height:13.00px;background:#fff;"></div>
<div class="a" style="left:772px;top:331.00px;width:96px;height:13.00px;background:#fff;"></div>
<div class="a" style="left:869px;top:331.00px;width:85px;height:13.00px;background:#fff;"></div>
<div class="a" style="left:955px;top:331.00px;width:27px;height:13.00px;background:#fff;"></div>
<div class="a" style="left:2px;top:330.00px;width:18.3px;height:14.20px;background:#232323;border-top:1px solid #a8a8a8;"></div>
<div class="cell" style="left:24px;top:331.70px;width:157px;"><span class="lnk"><span style="letter-spacing:-3.06px;">&nbsp;</span>.156</span></div>
<div class="cell" style="left:186px;top:331.70px;width:136px;"><span class="lnk">28006</span></div>
<div class="cell g" style="left:328px;top:331.70px;width:224px;letter-spacing:-0.45px;">NA</div>
<div class="cb" style="left:575.2px;top:332.20px;"></div>
<div class="cell" style="left:672px;top:331.70px;width:98px;"><span class="lnk">NA</span></div>
<div class="cell" style="left:775px;top:331.70px;width:92px;"><span class="lnk">NA</span></div>
<div class="cell g" style="left:958.5px;top:331.70px;width:24px;">SHIP</div>
<div class="a" style="left:21px;top:345.00px;width:161px;height:13.00px;background:#dfdfdf;"></div>
<div class="a" style="left:183px;top:345.00px;width:140px;height:13.00px;background:#dfdfdf;"></div>
<div class="a" style="left:324px;top:345.00px;width:229px;height:13.00px;background:#dfdfdf;"></div>
<div class="a" style="left:554px;top:345.00px;width:54px;height:13.00px;background:#dfdfdf;"></div>
<div class="a" style="left:609px;top:345.00px;width:59px;height:13.00px;background:#dfdfdf;"></div>
<div class="a" style="left:669px;top:345.00px;width:102px;height:13.00px;background:#dfdfdf;"></div>
<div class="a" style="left:772px;top:345.00px;width:96px;height:13.00px;background:#dfdfdf;"></div>
<div class="a" style="left:869px;top:345.00px;width:85px;height:13.00px;background:#dfdfdf;"></div>
<div class="a" style="left:955px;top:345.00px;width:27px;height:13.00px;background:#dfdfdf;"></div>
<div class="a" style="left:2px;top:344.00px;width:18.3px;height:14.20px;background:#232323;border-top:1px solid #a8a8a8;"></div>
<div class="cell" style="left:24px;top:345.90px;width:157px;"><span class="lnk"><span style="letter-spacing:-3.06px;">&nbsp;</span>.244</span></div>
<div class="cell" style="left:186px;top:345.90px;width:136px;"><span class="lnk">52500</span></div>
<div class="cell g" style="left:328px;top:345.90px;width:224px;letter-spacing:-0.45px;">TWIN CITY OPTICAL</div>
<div class="cb" style="left:575.2px;top:346.40px;"></div>
<div class="cell" style="left:672px;top:345.90px;width:98px;"><span class="lnk">NA</span></div>
<div class="cell" style="left:775px;top:345.90px;width:92px;"><span class="lnk">NA</span></div>
<div class="cell g" style="left:958.5px;top:345.90px;width:24px;">SHIP</div>
<div class="a" style="left:21px;top:360.00px;width:161px;height:13.00px;background:#fff;"></div>
<div class="a" style="left:183px;top:360.00px;width:140px;height:13.00px;background:#fff;"></div>
<div class="a" style="left:324px;top:360.00px;width:229px;height:13.00px;background:#fff;"></div>
<div class="a" style="left:554px;top:360.00px;width:54px;height:13.00px;background:#fff;"></div>
<div class="a" style="left:609px;top:360.00px;width:59px;height:13.00px;background:#fff;"></div>
<div class="a" style="left:669px;top:360.00px;width:102px;height:13.00px;background:#fff;"></div>
<div class="a" style="left:772px;top:360.00px;width:96px;height:13.00px;background:#fff;"></div>
<div class="a" style="left:869px;top:360.00px;width:85px;height:13.00px;background:#fff;"></div>
<div class="a" style="left:955px;top:360.00px;width:27px;height:13.00px;background:#fff;"></div>
<div class="a" style="left:2px;top:359.00px;width:18.3px;height:14.20px;background:#232323;border-top:1px solid #a8a8a8;"></div>
<div class="cell" style="left:24px;top:360.10px;width:157px;"><span class="lnk"><span style="letter-spacing:-3.06px;">&nbsp;</span>.3419</span></div>
<div class="cell" style="left:186px;top:360.10px;width:136px;"><span class="lnk">52500</span></div>
<div class="cb" style="left:575.2px;top:360.60px;"></div>
<div class="cell" style="left:672px;top:360.10px;width:98px;"><span class="lnk">NA</span></div>
<div class="cell" style="left:775px;top:360.10px;width:92px;"><span class="lnk">NA</span></div>
<div class="cell g" style="left:958.5px;top:360.10px;width:24px;">SHIP</div>
<div class="a" style="left:21px;top:374.00px;width:161px;height:13.00px;background:#dfdfdf;"></div>
<div class="a" style="left:183px;top:374.00px;width:140px;height:13.00px;background:#dfdfdf;"></div>
<div class="a" style="left:324px;top:374.00px;width:229px;height:13.00px;background:#dfdfdf;"></div>
<div class="a" style="left:554px;top:374.00px;width:54px;height:13.00px;background:#dfdfdf;"></div>
<div class="a" style="left:609px;top:374.00px;width:59px;height:13.00px;background:#dfdfdf;"></div>
<div class="a" style="left:669px;top:374.00px;width:102px;height:13.00px;background:#dfdfdf;"></div>
<div class="a" style="left:772px;top:374.00px;width:96px;height:13.00px;background:#dfdfdf;"></div>
<div class="a" style="left:869px;top:374.00px;width:85px;height:13.00px;background:#dfdfdf;"></div>
<div class="a" style="left:955px;top:374.00px;width:27px;height:13.00px;background:#dfdfdf;"></div>
<div class="a" style="left:2px;top:373.00px;width:18.3px;height:14.20px;background:#232323;border-top:1px solid #a8a8a8;"></div>
<div class="cell" style="left:24px;top:374.30px;width:157px;"><span class="lnk"><span style="letter-spacing:-3.06px;">&nbsp;</span>.386</span></div>
<div class="cell" style="left:186px;top:374.30px;width:136px;"><span class="lnk">52500</span></div>
<div class="cell g" style="left:328px;top:374.30px;width:224px;letter-spacing:-0.45px;">LIFETIME VISION CENTER (</div>
<div class="cb" style="left:575.2px;top:374.80px;"></div>
<div class="cell" style="left:672px;top:374.30px;width:98px;"><span class="lnk">NA</span></div>
<div class="cell" style="left:775px;top:374.30px;width:92px;"><span class="lnk">NA</span></div>
<div class="cell g" style="left:958.5px;top:374.30px;width:24px;">SHIP</div>
<div class="a" style="left:21px;top:388.00px;width:161px;height:13.00px;background:#fff;"></div>
<div class="a" style="left:183px;top:388.00px;width:140px;height:13.00px;background:#fff;"></div>
<div class="a" style="left:324px;top:388.00px;width:229px;height:13.00px;background:#fff;"></div>
<div class="a" style="left:554px;top:388.00px;width:54px;height:13.00px;background:#fff;"></div>
<div class="a" style="left:609px;top:388.00px;width:59px;height:13.00px;background:#fff;"></div>
<div class="a" style="left:669px;top:388.00px;width:102px;height:13.00px;background:#fff;"></div>
<div class="a" style="left:772px;top:388.00px;width:96px;height:13.00px;background:#fff;"></div>
<div class="a" style="left:869px;top:388.00px;width:85px;height:13.00px;background:#fff;"></div>
<div class="a" style="left:955px;top:388.00px;width:27px;height:13.00px;background:#fff;"></div>
<div class="a" style="left:2px;top:387.00px;width:18.3px;height:14.20px;background:#232323;border-top:1px solid #a8a8a8;"></div>
<div class="cell" style="left:24px;top:388.50px;width:157px;"><span class="lnk"><span style="letter-spacing:-3.06px;">&nbsp;</span>.386</span></div>
<div class="cell" style="left:186px;top:388.50px;width:136px;"><span class="lnk">52500</span></div>
<div class="cell g" style="left:328px;top:388.50px;width:224px;letter-spacing:-0.45px;">WAL-MART VISION CENTE</div>
<div class="cb" style="left:575.2px;top:389.00px;"></div>
<div class="cell" style="left:672px;top:388.50px;width:98px;"><span class="lnk">NA</span></div>
<div class="cell" style="left:775px;top:388.50px;width:92px;"><span class="lnk">NA</span></div>
<div class="cell g" style="left:958.5px;top:388.50px;width:24px;">SHIP</div>
<div class="a" style="left:21px;top:402.00px;width:161px;height:13.00px;background:#dfdfdf;"></div>
<div class="a" style="left:183px;top:402.00px;width:140px;height:13.00px;background:#dfdfdf;"></div>
<div class="a" style="left:324px;top:402.00px;width:229px;height:13.00px;background:#dfdfdf;"></div>
<div class="a" style="left:554px;top:402.00px;width:54px;height:13.00px;background:#dfdfdf;"></div>
<div class="a" style="left:609px;top:402.00px;width:59px;height:13.00px;background:#dfdfdf;"></div>
<div class="a" style="left:669px;top:402.00px;width:102px;height:13.00px;background:#dfdfdf;"></div>
<div class="a" style="left:772px;top:402.00px;width:96px;height:13.00px;background:#dfdfdf;"></div>
<div class="a" style="left:869px;top:402.00px;width:85px;height:13.00px;background:#dfdfdf;"></div>
<div class="a" style="left:955px;top:402.00px;width:27px;height:13.00px;background:#dfdfdf;"></div>
<div class="a" style="left:2px;top:401.00px;width:18.3px;height:14.20px;background:#232323;border-top:1px solid #a8a8a8;"></div>
<div class="cell" style="left:24px;top:402.70px;width:157px;"><span class="lnk"><span style="letter-spacing:-3.06px;">&nbsp;</span>.811</span></div>
<div class="cell" style="left:186px;top:402.70px;width:136px;"><span class="lnk">52500</span></div>
<div class="cell g" style="left:328px;top:402.70px;width:224px;letter-spacing:-0.45px;">EL OPTICAL COMPANY</div>
<div class="cb" style="left:575.2px;top:403.20px;"></div>
<div class="cell" style="left:672px;top:402.70px;width:98px;"><span class="lnk">NA</span></div>
<div class="cell" style="left:775px;top:402.70px;width:92px;"><span class="lnk">NA</span></div>
<div class="cell g" style="left:958.5px;top:402.70px;width:24px;">SHIP</div>
<div class="a" style="left:21px;top:416.00px;width:161px;height:13.00px;background:#fff;"></div>
<div class="a" style="left:183px;top:416.00px;width:140px;height:13.00px;background:#fff;"></div>
<div class="a" style="left:324px;top:416.00px;width:229px;height:13.00px;background:#fff;"></div>
<div class="a" style="left:554px;top:416.00px;width:54px;height:13.00px;background:#fff;"></div>
<div class="a" style="left:609px;top:416.00px;width:59px;height:13.00px;background:#fff;"></div>
<div class="a" style="left:669px;top:416.00px;width:102px;height:13.00px;background:#fff;"></div>
<div class="a" style="left:772px;top:416.00px;width:96px;height:13.00px;background:#fff;"></div>
<div class="a" style="left:869px;top:416.00px;width:85px;height:13.00px;background:#fff;"></div>
<div class="a" style="left:955px;top:416.00px;width:27px;height:13.00px;background:#fff;"></div>
<div class="a" style="left:2px;top:415.00px;width:18.3px;height:14.20px;background:#232323;border-top:1px solid #a8a8a8;"></div>
<div class="cell" style="left:24px;top:416.90px;width:157px;"><span class="lnk"><span style="letter-spacing:-3.06px;">&nbsp;</span>.LRW20576</span></div>
<div class="cell" style="left:186px;top:416.90px;width:136px;"><span class="lnk">52500</span></div>
<div class="cb" style="left:575.2px;top:417.40px;"></div>
<div class="cell" style="left:672px;top:416.90px;width:98px;"><span class="lnk">NA</span></div>
<div class="cell" style="left:775px;top:416.90px;width:92px;"><span class="lnk">NA</span></div>
<div class="cell g" style="left:958.5px;top:416.90px;width:24px;">SHIP</div>
<div class="a" style="left:21px;top:431.00px;width:161px;height:13.00px;background:#dfdfdf;"></div>
<div class="a" style="left:183px;top:431.00px;width:140px;height:13.00px;background:#dfdfdf;"></div>
<div class="a" style="left:324px;top:431.00px;width:229px;height:13.00px;background:#dfdfdf;"></div>
<div class="a" style="left:554px;top:431.00px;width:54px;height:13.00px;background:#dfdfdf;"></div>
<div class="a" style="left:609px;top:431.00px;width:59px;height:13.00px;background:#dfdfdf;"></div>
<div class="a" style="left:669px;top:431.00px;width:102px;height:13.00px;background:#dfdfdf;"></div>
<div class="a" style="left:772px;top:431.00px;width:96px;height:13.00px;background:#dfdfdf;"></div>
<div class="a" style="left:869px;top:431.00px;width:85px;height:13.00px;background:#dfdfdf;"></div>
<div class="a" style="left:955px;top:431.00px;width:27px;height:13.00px;background:#dfdfdf;"></div>
<div class="a" style="left:2px;top:430.00px;width:18.3px;height:14.20px;background:#232323;border-top:1px solid #a8a8a8;"></div>
<div class="cell" style="left:24px;top:431.10px;width:157px;"><span class="lnk"><span style="letter-spacing:-3.06px;">&nbsp;</span>????</span></div>
<div class="cell" style="left:186px;top:431.10px;width:136px;"><span class="lnk">33573</span></div>
<div class="cell g" style="left:328px;top:431.10px;width:224px;letter-spacing:-0.45px;">NA</div>
<div class="cb" style="left:575.2px;top:431.60px;"></div>
<div class="cell" style="left:672px;top:431.10px;width:98px;"><span class="lnk">NA</span></div>
<div class="cell" style="left:775px;top:431.10px;width:92px;"><span class="lnk">NA</span></div>
<div class="cell g" style="left:958.5px;top:431.10px;width:24px;">SHIP</div>
<div class="a" style="left:21px;top:445.00px;width:161px;height:13.00px;background:#fff;"></div>
<div class="a" style="left:183px;top:445.00px;width:140px;height:13.00px;background:#fff;"></div>
<div class="a" style="left:324px;top:445.00px;width:229px;height:13.00px;background:#fff;"></div>
<div class="a" style="left:554px;top:445.00px;width:54px;height:13.00px;background:#fff;"></div>
<div class="a" style="left:609px;top:445.00px;width:59px;height:13.00px;background:#fff;"></div>
<div class="a" style="left:669px;top:445.00px;width:102px;height:13.00px;background:#fff;"></div>
<div class="a" style="left:772px;top:445.00px;width:96px;height:13.00px;background:#fff;"></div>
<div class="a" style="left:869px;top:445.00px;width:85px;height:13.00px;background:#fff;"></div>
<div class="a" style="left:955px;top:445.00px;width:27px;height:13.00px;background:#fff;"></div>
<div class="a" style="left:2px;top:444.00px;width:18.3px;height:14.20px;background:#232323;border-top:1px solid #a8a8a8;"></div>
<div class="cell" style="left:24px;top:445.30px;width:157px;"><span class="lnk"><span style="letter-spacing:-3.06px;">&nbsp;</span>????</span></div>
<div class="cell" style="left:186px;top:445.30px;width:136px;"><span class="lnk">52501</span></div>
<div class="cell g" style="left:328px;top:445.30px;width:224px;letter-spacing:-0.45px;">WAL-MART VISION CENTE</div>
<div class="cb" style="left:575.2px;top:445.80px;"></div>
<div class="cell" style="left:672px;top:445.30px;width:98px;"><span class="lnk">NA</span></div>
<div class="cell" style="left:775px;top:445.30px;width:92px;"><span class="lnk">NA</span></div>
<div class="cell g" style="left:958.5px;top:445.30px;width:24px;">SHIP</div>
<div class="a" style="left:21px;top:459.00px;width:161px;height:13.00px;background:#dfdfdf;"></div>
<div class="a" style="left:183px;top:459.00px;width:140px;height:13.00px;background:#dfdfdf;"></div>
<div class="a" style="left:324px;top:459.00px;width:229px;height:13.00px;background:#dfdfdf;"></div>
<div class="a" style="left:554px;top:459.00px;width:54px;height:13.00px;background:#dfdfdf;"></div>
<div class="a" style="left:609px;top:459.00px;width:59px;height:13.00px;background:#dfdfdf;"></div>
<div class="a" style="left:669px;top:459.00px;width:102px;height:13.00px;background:#dfdfdf;"></div>
<div class="a" style="left:772px;top:459.00px;width:96px;height:13.00px;background:#dfdfdf;"></div>
<div class="a" style="left:869px;top:459.00px;width:85px;height:13.00px;background:#dfdfdf;"></div>
<div class="a" style="left:955px;top:459.00px;width:27px;height:13.00px;background:#dfdfdf;"></div>
<div class="a" style="left:2px;top:458.00px;width:18.3px;height:14.20px;background:#232323;border-top:1px solid #a8a8a8;"></div>
<div class="cell" style="left:24px;top:459.50px;width:157px;"><span class="lnk"><span style="letter-spacing:-3.06px;">&nbsp;</span>\560</span></div>
<div class="cell" style="left:186px;top:459.50px;width:136px;"><span class="lnk">52500</span></div>
<div class="cell g" style="left:328px;top:459.50px;width:224px;letter-spacing:-0.45px;">WAL-MART VISION CENTE</div>
<div class="cb" style="left:575.2px;top:460.00px;"></div>
<div class="cell" style="left:672px;top:459.50px;width:98px;"><span class="lnk">NA</span></div>
<div class="cell" style="left:775px;top:459.50px;width:92px;"><span class="lnk">NA</span></div>
<div class="cell g" style="left:958.5px;top:459.50px;width:24px;">SHIP</div>
<div class="a" style="left:21px;top:473.00px;width:161px;height:13.00px;background:#fff;"></div>
<div class="a" style="left:23px;top:473.50px;width:159px;height:12.00px;background:#c9dcae;"></div>
<div class="a" style="left:183px;top:473.00px;width:140px;height:13.00px;background:#fff;"></div>
<div class="a" style="left:324px;top:473.00px;width:229px;height:13.00px;background:#fff;"></div>
<div class="a" style="left:554px;top:473.00px;width:54px;height:13.00px;background:#fff;"></div>
<div class="a" style="left:609px;top:473.00px;width:59px;height:13.00px;background:#fff;"></div>
<div class="a" style="left:669px;top:473.00px;width:102px;height:13.00px;background:#fff;"></div>
<div class="a" style="left:772px;top:473.00px;width:96px;height:13.00px;background:#fff;"></div>
<div class="a" style="left:869px;top:473.00px;width:85px;height:13.00px;background:#fff;"></div>
<div class="a" style="left:955px;top:473.00px;width:27px;height:13.00px;background:#fff;"></div>
<div class="a" style="left:2px;top:472.00px;width:18.3px;height:14.20px;background:#232323;border-top:1px solid #a8a8a8;"></div>
<div class="cell" style="left:24px;top:473.70px;width:157px;"><span class="vis"><span style="letter-spacing:-3.06px;">&nbsp;</span>\6741</span></div>
<div class="cell" style="left:186px;top:473.70px;width:136px;"><span class="lnk">52501</span></div>
<div class="cell g" style="left:328px;top:473.70px;width:224px;letter-spacing:0.45px;">Wal-Mart Vision Center #1</div>
<div class="cb" style="left:575.2px;top:474.20px;"></div>
<div class="cell" style="left:672px;top:473.70px;width:98px;"><span class="lnk">NA</span></div>
<div class="cell" style="left:775px;top:473.70px;width:92px;"><span class="lnk">NA</span></div>
<div class="cell g" style="left:958.5px;top:473.70px;width:24px;">SHIP</div>
<div class="a" style="left:21px;top:487.00px;width:161px;height:13.00px;background:#dfdfdf;"></div>
<div class="a" style="left:183px;top:487.00px;width:140px;height:13.00px;background:#dfdfdf;"></div>
<div class="a" style="left:324px;top:487.00px;width:229px;height:13.00px;background:#dfdfdf;"></div>
<div class="a" style="left:554px;top:487.00px;width:54px;height:13.00px;background:#dfdfdf;"></div>
<div class="a" style="left:609px;top:487.00px;width:59px;height:13.00px;background:#dfdfdf;"></div>
<div class="a" style="left:669px;top:487.00px;width:102px;height:13.00px;background:#dfdfdf;"></div>
<div class="a" style="left:772px;top:487.00px;width:96px;height:13.00px;background:#dfdfdf;"></div>
<div class="a" style="left:869px;top:487.00px;width:85px;height:13.00px;background:#dfdfdf;"></div>
<div class="a" style="left:955px;top:487.00px;width:27px;height:13.00px;background:#dfdfdf;"></div>
<div class="a" style="left:2px;top:486.00px;width:18.3px;height:14.20px;background:#232323;border-top:1px solid #a8a8a8;"></div>
<div class="cell" style="left:24px;top:487.90px;width:157px;"><span class="lnk"><span style="letter-spacing:-3.06px;">&nbsp;</span>`1236</span></div>
<div class="cell" style="left:186px;top:487.90px;width:136px;"><span class="lnk">60129</span></div>
<div class="cell g" style="left:328px;top:487.90px;width:224px;letter-spacing:-0.45px;">NA</div>
<div class="cb" style="left:575.2px;top:488.40px;"></div>
<div class="cell" style="left:672px;top:487.90px;width:98px;"><span class="lnk">NA</span></div>
<div class="cell" style="left:775px;top:487.90px;width:92px;"><span class="lnk">NA</span></div>
<div class="cell g" style="left:958.5px;top:487.90px;width:24px;">SHIP</div>
<div class="a" style="left:21px;top:502.00px;width:161px;height:13.00px;background:#fff;"></div>
<div class="a" style="left:183px;top:502.00px;width:140px;height:13.00px;background:#fff;"></div>
<div class="a" style="left:324px;top:502.00px;width:229px;height:13.00px;background:#fff;"></div>
<div class="a" style="left:554px;top:502.00px;width:54px;height:13.00px;background:#fff;"></div>
<div class="a" style="left:609px;top:502.00px;width:59px;height:13.00px;background:#fff;"></div>
<div class="a" style="left:669px;top:502.00px;width:102px;height:13.00px;background:#fff;"></div>
<div class="a" style="left:772px;top:502.00px;width:96px;height:13.00px;background:#fff;"></div>
<div class="a" style="left:869px;top:502.00px;width:85px;height:13.00px;background:#fff;"></div>
<div class="a" style="left:955px;top:502.00px;width:27px;height:13.00px;background:#fff;"></div>
<div class="a" style="left:2px;top:501.00px;width:18.3px;height:14.20px;background:#232323;border-top:1px solid #a8a8a8;"></div>
<div class="cell" style="left:24px;top:502.10px;width:157px;"><span class="lnk"><span style="letter-spacing:-3.06px;">&nbsp;</span>+194</span></div>
<div class="cell" style="left:186px;top:502.10px;width:136px;"><span class="lnk">28006</span></div>
<div class="cell g" style="left:328px;top:502.10px;width:224px;letter-spacing:-0.45px;">NA</div>
<div class="cb" style="left:575.2px;top:502.60px;"></div>
<div class="cell" style="left:672px;top:502.10px;width:98px;"><span class="lnk">NA</span></div>
<div class="cell" style="left:775px;top:502.10px;width:92px;"><span class="lnk">NA</span></div>
<div class="cell g" style="left:958.5px;top:502.10px;width:24px;">SHIP</div>
<div class="a" style="left:21px;top:516.00px;width:161px;height:13.00px;background:#dfdfdf;"></div>
<div class="a" style="left:183px;top:516.00px;width:140px;height:13.00px;background:#dfdfdf;"></div>
<div class="a" style="left:324px;top:516.00px;width:229px;height:13.00px;background:#dfdfdf;"></div>
<div class="a" style="left:554px;top:516.00px;width:54px;height:13.00px;background:#dfdfdf;"></div>
<div class="a" style="left:609px;top:516.00px;width:59px;height:13.00px;background:#dfdfdf;"></div>
<div class="a" style="left:669px;top:516.00px;width:102px;height:13.00px;background:#dfdfdf;"></div>
<div class="a" style="left:772px;top:516.00px;width:96px;height:13.00px;background:#dfdfdf;"></div>
<div class="a" style="left:869px;top:516.00px;width:85px;height:13.00px;background:#dfdfdf;"></div>
<div class="a" style="left:955px;top:516.00px;width:27px;height:13.00px;background:#dfdfdf;"></div>
<div class="a" style="left:2px;top:515.00px;width:18.3px;height:14.20px;background:#232323;border-top:1px solid #a8a8a8;"></div>
<div class="cell" style="left:24px;top:516.30px;width:157px;"><span class="lnk"><span style="letter-spacing:-3.06px;">&nbsp;</span>+314</span></div>
<div class="cell" style="left:186px;top:516.30px;width:136px;"><span class="lnk">60000</span></div>
<div class="cell g" style="left:328px;top:516.30px;width:224px;letter-spacing:-0.45px;">B &amp; B OPTICAL COMPANY</div>
<div class="cb" style="left:575.2px;top:516.80px;"></div>
<div class="cell" style="left:672px;top:516.30px;width:98px;"><span class="lnk">NA</span></div>
<div class="cell" style="left:775px;top:516.30px;width:92px;"><span class="lnk">NA</span></div>
<div class="cell g" style="left:958.5px;top:516.30px;width:24px;">SHIP</div>
<div class="a" style="left:21px;top:530.00px;width:161px;height:13.00px;background:#fff;"></div>
<div class="a" style="left:183px;top:530.00px;width:140px;height:13.00px;background:#fff;"></div>
<div class="a" style="left:324px;top:530.00px;width:229px;height:13.00px;background:#fff;"></div>
<div class="a" style="left:554px;top:530.00px;width:54px;height:13.00px;background:#fff;"></div>
<div class="a" style="left:609px;top:530.00px;width:59px;height:13.00px;background:#fff;"></div>
<div class="a" style="left:669px;top:530.00px;width:102px;height:13.00px;background:#fff;"></div>
<div class="a" style="left:772px;top:530.00px;width:96px;height:13.00px;background:#fff;"></div>
<div class="a" style="left:869px;top:530.00px;width:85px;height:13.00px;background:#fff;"></div>
<div class="a" style="left:955px;top:530.00px;width:27px;height:13.00px;background:#fff;"></div>
<div class="a" style="left:2px;top:529.00px;width:18.3px;height:14.20px;background:#232323;border-top:1px solid #a8a8a8;"></div>
<div class="cell" style="left:24px;top:530.50px;width:157px;"><span class="lnk"><span style="letter-spacing:-3.06px;">&nbsp;</span>0</span></div>
<div class="cell" style="left:186px;top:530.50px;width:136px;"><span class="lnk">29170</span></div>
<div class="cell g" style="left:328px;top:530.50px;width:224px;letter-spacing:-0.45px;">NA</div>
<div class="cb" style="left:575.2px;top:531.00px;"></div>
<div class="cell" style="left:672px;top:530.50px;width:98px;"><span class="lnk">NA</span></div>
<div class="cell" style="left:775px;top:530.50px;width:92px;"><span class="lnk">NA</span></div>
<div class="cell g" style="left:958.5px;top:530.50px;width:24px;">SHIP</div>
<div class="a" style="left:21px;top:544.00px;width:161px;height:13.00px;background:#dfdfdf;"></div>
<div class="a" style="left:183px;top:544.00px;width:140px;height:13.00px;background:#dfdfdf;"></div>
<div class="a" style="left:324px;top:544.00px;width:229px;height:13.00px;background:#dfdfdf;"></div>
<div class="a" style="left:554px;top:544.00px;width:54px;height:13.00px;background:#dfdfdf;"></div>
<div class="a" style="left:609px;top:544.00px;width:59px;height:13.00px;background:#dfdfdf;"></div>
<div class="a" style="left:669px;top:544.00px;width:102px;height:13.00px;background:#dfdfdf;"></div>
<div class="a" style="left:772px;top:544.00px;width:96px;height:13.00px;background:#dfdfdf;"></div>
<div class="a" style="left:869px;top:544.00px;width:85px;height:13.00px;background:#dfdfdf;"></div>
<div class="a" style="left:955px;top:544.00px;width:27px;height:13.00px;background:#dfdfdf;"></div>
<div class="a" style="left:2px;top:543.00px;width:18.3px;height:14.20px;background:#232323;border-top:1px solid #a8a8a8;"></div>
<div class="cell" style="left:24px;top:544.70px;width:157px;"><span class="lnk"><span style="letter-spacing:-3.06px;">&nbsp;</span>0</span></div>
<div class="cell" style="left:186px;top:544.70px;width:136px;"><span class="lnk">33573</span></div>
<div class="cell g" style="left:328px;top:544.70px;width:224px;letter-spacing:-0.45px;">NA</div>
<div class="cb" style="left:575.2px;top:545.20px;"></div>
<div class="cell" style="left:672px;top:544.70px;width:98px;"><span class="lnk">NA</span></div>
<div class="cell" style="left:775px;top:544.70px;width:92px;"><span class="lnk">NA</span></div>
<div class="cell g" style="left:958.5px;top:544.70px;width:24px;">SHIP</div>
<div class="a" style="left:21px;top:558.00px;width:161px;height:13.00px;background:#fff;"></div>
<div class="a" style="left:183px;top:558.00px;width:140px;height:13.00px;background:#fff;"></div>
<div class="a" style="left:324px;top:558.00px;width:229px;height:13.00px;background:#fff;"></div>
<div class="a" style="left:554px;top:558.00px;width:54px;height:13.00px;background:#fff;"></div>
<div class="a" style="left:609px;top:558.00px;width:59px;height:13.00px;background:#fff;"></div>
<div class="a" style="left:669px;top:558.00px;width:102px;height:13.00px;background:#fff;"></div>
<div class="a" style="left:772px;top:558.00px;width:96px;height:13.00px;background:#fff;"></div>
<div class="a" style="left:869px;top:558.00px;width:85px;height:13.00px;background:#fff;"></div>
<div class="a" style="left:955px;top:558.00px;width:27px;height:13.00px;background:#fff;"></div>
<div class="a" style="left:2px;top:557.00px;width:18.3px;height:14.20px;background:#232323;border-top:1px solid #a8a8a8;"></div>
<div class="cell" style="left:24px;top:558.90px;width:157px;"><span class="lnk"><span style="letter-spacing:-3.06px;">&nbsp;</span>0</span></div>
<div class="cell" style="left:186px;top:558.90px;width:136px;"><span class="lnk">4240</span></div>
<div class="cell g" style="left:328px;top:558.90px;width:224px;letter-spacing:-0.45px;">NA</div>
<div class="cb" style="left:575.2px;top:559.40px;"></div>
<div class="cell" style="left:672px;top:558.90px;width:98px;"><span class="lnk">NA</span></div>
<div class="cell" style="left:775px;top:558.90px;width:92px;"><span class="lnk">NA</span></div>
<div class="cell g" style="left:958.5px;top:558.90px;width:24px;">SHIP</div>
<div class="a" style="left:21px;top:287.80px;width:160.500px;height:15.40px;border:1.500px solid #f4a8a8;"></div>
<div class="a" style="left:159.5px;top:219.90px;width:5px;height:5px;border-radius:3px;background:#3a3fd0;"></div>
<div class="a" style="left:982px;top:76px;width:17.5px;height:487px;background:#111;border-radius:6px 0 6px 6px;"></div>
<div class="a" style="left:986px;top:96px;width:8.5px;height:49px;background:#9b9b9b;border-radius:4.5px;"></div>
<svg class="a" style="left:982px;top:76px" width="17" height="14" viewBox="0 0 17 14"><path d="M8.400 4.300l4.700 6.300h-9.400z" fill="#9a9a9a"/></svg>
<svg class="a" style="left:982px;top:549px" width="17" height="14" viewBox="0 0 17 14"><path d="M8.3 9.5l4-6h-8z" fill="#8a8a8a"/></svg>
<div class="a" style="left:984px;top:563px;width:15px;height:16px;background:#c9c9cd;"></div>
<div class="a" style="left:2px;top:563px;width:460px;height:16px;background:#232323;"></div>
<div class="t" style="left:7px;top:564.5px;font-size:11.5px;line-height:15px;color:#fff;letter-spacing:0.1px;-webkit-text-stroke:0.25px #fff;">Record:</div>
<svg class="a" style="left:50px;top:564px" width="145" height="15" viewBox="0 0 145 15"><g fill="#e0e0e0"><rect x="3" y="5" width="1.300" height="6.300"/><path d="M9.300 5v6.300l-4.300-3.150z"/><path d="M26.500 5v6.300l-4.500-3.150z"/><path d="M91.300 5v6.300l4.500-3.150z"/><path d="M107.600 5v6.300l4.300-3.150z"/><rect x="112.700" y="5" width="1.300" height="6.300"/></g><g fill="#5c5c5c"><path d="M122 5v6.300l4.300-3.150z"/><path d="M127.500 8.150h6.500M130.750 5v6.300M128.500 5.900l4.500 4.500M133 5.900l-4.500 4.500" stroke="#5c5c5c" stroke-width="0.800" fill="none"/></g></svg>
<div class="a" style="left:82px;top:564.5px;width:50.5px;height:14.5px;background:#404040;border:1px solid #6a6a6a;color:#fff;font-size:11.5px;line-height:13px;padding-left:2px;">18</div>
<div class="a" style="left:190px;top:564px;width:1px;height:15px;background:#3a3a3a;"></div>
<svg class="a" style="left:196px;top:563.5px" width="20" height="16" viewBox="0 0 20 16"><path d="M1 1.5h16l-6 6.5v6l-4-2v-4z" fill="#6a6a6a"/><path d="M11 10.5l4 4M15 10.5l-4 4" stroke="#8a8a8a" stroke-width="1.2"/></svg>
<div class="t" style="left:217.5px;top:564.5px;font-size:11.5px;line-height:15px;color:#5e5e5e;letter-spacing:0.3px;-webkit-text-stroke:0.25px #5e5e5e;">No Filter</div>
<div class="a" style="left:270px;top:564px;width:1px;height:15px;background:#3a3a3a;"></div>
<div class="a" style="left:277.5px;top:564.5px;width:70px;height:14.5px;background:#404040;border:1px solid #6a6a6a;color:#fff;font-size:11px;line-height:13px;padding-left:1px;-webkit-text-stroke:0.25px #fff;">Search</div>
<div class="a" style="left:372px;top:563.300px;width:100px;height:15.500px;background:#0c0c0c;border-radius:7.500px 0 0 7.500px;"></div>
<svg class="a" style="left:376px;top:565px" width="10" height="14" viewBox="0 0 10 14"><path d="M7.5 2.5v8.5l-5.5-4.2z" fill="#b0b0b0"/></svg>
<div class="a" style="left:388.5px;top:567.5px;width:90px;height:8.5px;background:#9b9b9b;border-radius:4.5px;"></div>
<div class="t" style="left:24px;top:578.5px;font-size:10.9px;line-height:14px;color:#33f033;font-weight:bold;">Right click Serial Number&nbsp; for ALL Actions</div>
<div class="a" style="left:0;top:579px;width:462px;height:1px;background:#b2b2b2;"></div>
<div class="a" style="left:0;top:594.300px;width:1000px;height:1.200px;background:#a6a6a6;"></div>
<div class="a" style="left:76px;top:233px;width:275px;height:196.700px;background:#2b2b2b;"></div>
<div class="mi" style="top:232.3px;">Serial # %923200599 Detail</div>
<div class="mi" style="top:254px;">Transaction History - Serial #<span style="letter-spacing:3px">&nbsp;</span> %923200599</div>
<div class="mi" style="top:275.8px;">Part # 1000DMV Detail</div>
<div class="mi" style="top:297.8px;">Cu<u>t</u></div>
<div class="mi" style="top:319.3px;"><u>C</u>opy</div>
<div class="mi d" style="top:341px;"><u>P</u>aste</div>
<div class="mi d" style="top:364.8px;">Sort <u>A</u>scending</div>
<div class="mi d" style="top:386.6px;">Sort <u>D</u>escending</div>
<div class="mi" style="top:407.7px;">Filter Advance</div>
<div class="a" style="left:110px;top:363.5px;width:241px;height:1px;background:#444;"></div>
<svg class="a" style="left:80px;top:235.5px" width="17" height="16" viewBox="0 0 17 16"><path d="M4.600 2.600C1.800 5.600 3.400 11.600 8.600 13.600" stroke="#c9c9c9" stroke-width="3.200" fill="none" stroke-linecap="butt"/><path d="M3.300 1.200l3 1l-1.100 3l-3-1z" fill="#c9c9c9"/><path d="M7.900 10.600l3.100 1.900l-1.700 2.800l-3.100-1.800z" fill="#c9c9c9"/><g stroke="#e6be6a" stroke-width="1.100" fill="none"><path d="M12.500 1.200v2.500M12.500 6.300v2.500M8.700 5h2.500M13.800 5h2.500M9.800 2.300l1.700 1.700M13.500 6l1.700 1.700M15.200 2.300l-1.700 1.700M11.500 6l-1.700 1.700"/></g></svg>
<svg class="a" style="left:80px;top:257.2px" width="17" height="16" viewBox="0 0 17 16"><path d="M4.600 2.600C1.800 5.600 3.400 11.600 8.600 13.600" stroke="#c9c9c9" stroke-width="3.200" fill="none" stroke-linecap="butt"/><path d="M3.300 1.200l3 1l-1.100 3l-3-1z" fill="#c9c9c9"/><path d="M7.900 10.600l3.100 1.900l-1.700 2.800l-3.100-1.800z" fill="#c9c9c9"/><g stroke="#e6be6a" stroke-width="1.100" fill="none"><path d="M12.500 1.200v2.500M12.500 6.300v2.500M8.700 5h2.500M13.800 5h2.500M9.800 2.300l1.700 1.700M13.500 6l1.700 1.700M15.200 2.300l-1.700 1.700M11.500 6l-1.700 1.700"/></g></svg>
<svg class="a" style="left:80px;top:279px" width="17" height="16" viewBox="0 0 17 16"><path d="M4.600 2.600C1.800 5.600 3.400 11.600 8.600 13.600" stroke="#c9c9c9" stroke-width="3.200" fill="none" stroke-linecap="butt"/><path d="M3.300 1.200l3 1l-1.100 3l-3-1z" fill="#c9c9c9"/><path d="M7.900 10.600l3.100 1.900l-1.700 2.800l-3.100-1.800z" fill="#c9c9c9"/><g stroke="#e6be6a" stroke-width="1.100" fill="none"><path d="M12.500 1.200v2.500M12.500 6.300v2.500M8.700 5h2.500M13.800 5h2.500M9.800 2.300l1.700 1.700M13.500 6l1.700 1.700M15.200 2.300l-1.700 1.700M11.500 6l-1.700 1.700"/></g></svg>
<svg class="a" style="left:80px;top:300px" width="18" height="18" viewBox="0 0 18 18"><path d="M5.200 1.500l6.300 8.800M12.800 1.500l-6.300 8.800" stroke="#d4d4d4" stroke-width="1.700" fill="none"/><circle cx="5.200" cy="12.700" r="2.300" stroke="#3a8ad8" stroke-width="1.200" fill="none"/><circle cx="12.800" cy="12.700" r="2.300" stroke="#3a8ad8" stroke-width="1.200" fill="none"/></svg>
<svg class="a" style="left:79.500px;top:322px" width="18" height="18" viewBox="0 0 18 18"><path d="M1.500 2h6.500v9.500h-6.500z" fill="#e4e4e4"/><path d="M3.500 4.500h3M3.500 6.500h3M3.500 8.500h3" stroke="#3a78c8" stroke-width="0.900"/><path d="M8.500 5.500h5.500l2.500 2.500v8h-8z" fill="#f4f4f4" stroke="#2b2b2b" stroke-width="0.800"/><path d="M10 10h5M10 12.300h5" stroke="#3a78c8" stroke-width="1.200"/></svg>
<svg class="a" style="left:80px;top:344px" width="18" height="18" viewBox="0 0 18 18"><path d="M2 2.500h3.500l0.800-1.500h3.400l0.800 1.500h3.500v5h-4v7.500h-8z" fill="#8c8c8c"/><path d="M10 7.500h4.500l2.500 2.500v5.500h-7z" fill="#9c9c9c" stroke="#2b2b2b" stroke-width="0.900"/></svg>
<div class="t" style="left:83px;top:367.5px;font-size:8px;line-height:7.500px;color:#6e6e6e;">A<br>Z</div>
<svg class="a" style="left:89px;top:367.5px" width="10" height="16" viewBox="0 0 10 16"><path d="M4.500 0.500v13.500M1.800 11.300l2.700 2.700l2.700-2.700" stroke="#6e6e6e" stroke-width="1" fill="none"/></svg>
<div class="t" style="left:83px;top:389.3px;font-size:8px;line-height:7.500px;color:#6e6e6e;">Z<br>A</div>
<svg class="a" style="left:89px;top:389.3px" width="10" height="16" viewBox="0 0 10 16"><path d="M4.500 0.500v13.500M1.800 11.300l2.700 2.700l2.700-2.700" stroke="#6e6e6e" stroke-width="1" fill="none"/></svg>
<svg class="a" style="left:81.500px;top:410.500px" width="16" height="18" viewBox="0 0 16 18"><path d="M6.500 1.500h5.500l-3.300 5.500h3.800l-8.500 9.500l2.600-7h-3.300z" fill="#f2c36b"/></svg>
<div class="a" style="left:462px;top:270px;width:522px;height:309px;background:#505050;">
</div>
<div class="a" style="left:462px;top:252.5px;width:522px;height:24px;background:#fff;border-radius:6px 6px 0 0;"></div>
<div class="a" style="left:462.500px;top:253px;width:1.500px;height:1px;background:#555;"></div>
<div class="a" style="left:482px;top:258.5px;width:1px;height:10.5px;background:#e08a8a;"></div>
<div class="t" style="left:486.5px;top:257px;font-size:9.4px;line-height:14px;color:#8f8f8f;">Serial Number Form</div>
<svg class="a" style="left:880px;top:253px" width="104" height="23" viewBox="0 0 104 23"><path d="M9.500 10.500h8" stroke="#a0a0a0" stroke-width="1" fill="none"/><rect x="46.500" y="6.500" width="7" height="7" stroke="#f0f0f0" fill="none"/><path d="M83 7l7 7M90.500 7l-7 7" stroke="#a0a0a0" stroke-width="1" fill="none"/></svg>
<div class="a" style="left:462px;top:276px;width:522px;height:20px;background:#999;"></div>
<div class="a" style="left:462.5px;top:278px;width:18px;height:17px;background:repeating-linear-gradient(90deg,rgba(0,0,0,0) 0,rgba(0,0,0,0) 2.200px,rgba(150,165,185,0.9) 2.200px,rgba(150,165,185,0.9) 3px),linear-gradient(90deg,#4a88cc 0%,#4a88cc 50%,#8098b4 100%);"></div>
<div class="tbtn" style="left:481px;width:39px;padding-left:19.5px;">Ok</div>
<div class="tbtn" style="left:521px;width:56px;padding-left:20.5px;">Cancel</div>
<div class="tbtn" style="left:578px;width:48px;padding-left:22px;">Save</div>
<div class="tbtn" style="left:627px;width:46px;padding-left:20.5px;">New</div>
<div class="tbtn" style="left:674px;width:55px;padding-left:21.5px;">Delete</div>
<div class="tbtn" style="left:730px;width:20px;padding-left:0px;"></div>
<svg class="a" style="left:483px;top:279px" width="16" height="16" viewBox="0 0 16 16"><circle cx="7.500" cy="7.500" r="7" fill="#2fb59c"/><path d="M4 7.500l2.500 2.500l4.500-5" stroke="#fff" stroke-width="1.500" fill="none"/></svg>
<svg class="a" style="left:524px;top:279px" width="18" height="16" viewBox="0 0 18 16"><path d="M2 2l11 11M13 2l-11 11" stroke="#e0302a" stroke-width="2" fill="none"/><path d="M12 10.500v3.500h3.500" stroke="#4ab84a" stroke-width="1.300" fill="none"/></svg>
<svg class="a" style="left:581px;top:279px" width="16" height="16" viewBox="0 0 16 16"><path d="M1 1h11l3 3v11h-14z" fill="#9cc4ee"/><rect x="3.500" y="1" width="8" height="5" fill="#e8f2fc"/><rect x="3" y="9" width="10" height="6" fill="#e8f2fc"/></svg>
<svg class="a" style="left:630px;top:280px" width="14" height="14" viewBox="0 0 14 14"><circle cx="7" cy="7" r="6.500" fill="#3cae49"/><path d="M7 4v6M4 7h6" stroke="#fff" stroke-width="1.500"/></svg>
<svg class="a" style="left:677px;top:280px" width="14" height="14" viewBox="0 0 14 14"><circle cx="7" cy="7" r="6.500" fill="#e63a36"/><path d="M4.800 4.800l4.400 4.400M9.200 4.800l-4.400 4.400" stroke="#fff" stroke-width="1.500"/></svg>
<svg class="a" style="left:733px;top:279px" width="16" height="16" viewBox="0 0 16 16"><path d="M1 1h11l3 3v11h-14z" fill="#2a7be8"/><path d="M3 5h10M3 7.500h10M3 10h10M3 12.500h10" stroke="#dcebff" stroke-width="1"/></svg>
<div class="t" style="left:769px;top:280.500px;font-size:8.800px;line-height:13px;color:#33f033;font-weight:bold;">Look for:</div>
<div class="a" style="left:811.5px;top:280px;width:171px;height:13.400px;background:#fff;border:1px solid #555;"></div>
<div class="fl" style="left:465.5px;top:302.8px;">Serial Number:</div>
<div class="fi" style="left:531.5px;top:303px;width:231px;height:12px;line-height:11.4px;">0018</div>
<div class="fl" style="left:768.5px;top:302.8px;">Rev.:</div>
<div class="fi" style="left:790.5px;top:303px;width:18.5px;height:12px;line-height:11.4px;">C</div>
<div class="fl" style="left:816.5px;top:302.8px;">Status:</div>
<div class="fi" style="left:847.5px;top:303px;width:75.5px;height:12px;line-height:11.4px;">SHIPPED</div>
<svg class="a" style="left:912px;top:303.5px" width="11" height="11" viewBox="0 0 11 11"><rect x="0" y="0" width="11" height="11" fill="#fff"/><rect x="0.500" y="0.500" width="10" height="10" fill="none" stroke="#e4e4e4"/><path d="M2.500 4.500l3 3l3-3" stroke="#8a8a8a" stroke-width="1" fill="none"/></svg>
<div class="a" style="left:930.5px;top:306.5px;width:8px;height:8px;background:#f4f4f4;border-radius:1.5px;"></div>
<div class="fl" style="left:943px;top:302.8px;">Active</div>
<div class="fl" style="left:468.5px;top:323.8px;">Sn Location:</div>
<div class="fi" style="left:528.5px;top:325px;width:82px;height:11.5px;line-height:10.9px;">COGS-PART</div>
<svg class="a" style="left:599.5px;top:325.25px" width="11" height="11" viewBox="0 0 11 11"><rect x="0" y="0" width="11" height="11" fill="#fff"/><rect x="0.500" y="0.500" width="10" height="10" fill="none" stroke="#e4e4e4"/><path d="M2.500 4.500l3 3l3-3" stroke="#8a8a8a" stroke-width="1" fill="none"/></svg>
<div class="a" style="left:616px;top:321.500px;width:366.500px;height:18.500px;border:1px solid #c8c8c8;"></div>
<div class="fl" style="left:623px;top:323.8px;">Warranty</div>
<div class="fl" style="left:673.5px;top:323.8px;">Start Date:</div>
<div class="fi" style="left:721.5px;top:325px;width:47px;height:11.5px;line-height:10.9px;"></div>
<div class="fl" style="left:775.5px;top:323.8px;">End Date:</div>
<div class="fi" style="left:823px;top:325px;width:47px;height:11.5px;line-height:10.9px;"></div>
<div class="a" style="left:464px;top:361px;width:92px;height:178px;border:1px solid #a8a8a8;"></div>
<div class="tab" style="top:362.5px;background:#4472c4;color:#27cc66;-webkit-text-stroke:0.3px #27cc66;padding-left:16.500px;">Header</div>
<div class="tab" style="top:380.85px;padding-left:20px;">Notes</div>
<div class="tab" style="top:399.2px;padding-left:20px;font-size:7.4px;-webkit-text-stroke:0;">Documents</div>
<div class="tab" style="top:417.55px;padding-left:20px;">Process history</div>
<div class="tab" style="top:435.9px;padding-left:20px;">SN BOM</div>
<div class="tab" style="top:454.25px;padding-left:18px;">BOM History</div>
<div class="tab" style="top:472.6px;padding-left:20px;">Trans. History</div>
<div class="tab" style="top:490.95px;padding-left:20px;">Failure Reports</div>
<svg class="a" style="left:469px;top:365px" width="12" height="14" viewBox="0 0 12 14"><rect x="0.500" y="0.500" width="11" height="13" fill="#e8f4ec" stroke="#fff"/><rect x="1" y="4" width="10" height="6" fill="#2fb878"/><rect x="4" y="6" width="3" height="2" fill="#fff"/></svg>
<svg class="a" style="left:470px;top:384.35px" width="12" height="12" viewBox="0 0 12 12"><path d="M0.500 0.500h11v8l-3 3h-8z" fill="#f6b81e"/><path d="M2 3.500h8" stroke="#e09a10" stroke-width="1"/></svg>
<svg class="a" style="left:469px;top:402.2px" width="13" height="13" viewBox="0 0 13 13"><path d="M3.500 8.500l5-5.500c1.300-1.300 3.300 0.600 2 2l-5.800 6.200c-2 2-4.800-0.700-2.800-2.800l5-5.300" stroke="#2a8ad4" stroke-width="1.300" fill="none"/></svg>
<svg class="a" style="left:468px;top:419.55px" width="15" height="15" viewBox="0 0 15 15"><circle cx="10.300" cy="4.300" r="1.800" stroke="#f2a41e" stroke-width="1.600" fill="none"/><circle cx="10.300" cy="4.300" r="3.100" stroke="#f2a41e" stroke-width="1.300" fill="none" stroke-dasharray="1.300 1.135"/><circle cx="5" cy="10" r="2.200" stroke="#e2571e" stroke-width="1.900" fill="none"/><circle cx="5" cy="10" r="3.700" stroke="#e2571e" stroke-width="1.400" fill="none" stroke-dasharray="1.500 1.406"/></svg>
<svg class="a" style="left:469px;top:438.4px" width="14" height="14" viewBox="0 0 14 14"><rect x="1" y="1" width="4.500" height="3.500" fill="#f0a81e"/><rect x="8" y="5.500" width="5" height="3.500" fill="#f0a81e"/><rect x="8" y="10" width="5" height="3.500" fill="#f0a81e"/><path d="M3 4.500v7.500h5M3 7.300h5" stroke="#888" stroke-width="1" fill="none"/></svg>
<svg class="a" style="left:467.500px;top:456.25px" width="15" height="15" viewBox="0 0 15 15"><rect x="0.500" y="0.500" width="14" height="14" rx="1.500" fill="#2a8fe0" stroke="#d8dce4"/><circle cx="7.500" cy="7.500" r="4.600" stroke="#fff" stroke-width="1.300" fill="none"/><path d="M7.500 5v2.800h2.300" stroke="#fff" stroke-width="1.100" fill="none"/></svg>
<svg class="a" style="left:470px;top:475.1px" width="11" height="14" viewBox="0 0 11 14"><path d="M0.500 0.500h7l3 3v10h-10z" fill="#6cb2f2"/><path d="M2.500 4.500h4M2.500 8h3.500M2.500 10.500h5" stroke="#1e6ed4" stroke-width="1.300"/></svg>
<svg class="a" style="left:469px;top:493.95px" width="14" height="13" viewBox="0 0 14 13"><path d="M0.500 0.500h13v8.500l-3.500 3.500h-9.500z" fill="#dbe9f8"/><path d="M2.500 4h9M2.500 6.500h9M2.500 9h5" stroke="#8ab0e0" stroke-width="1"/></svg>
<div class="a" style="left:559.5px;top:361px;width:423px;height:179.500px;border:1px solid #a8a8a8;"></div>
<div class="fl" style="left:564px;top:370px;">Part #:</div>
<div class="fi" style="left:598.5px;top:371px;width:120.5px;height:11.5px;line-height:10.9px;"><span class="lnk" style="color:#2368c4;-webkit-text-stroke:0;">2534</span></div>
<svg class="a" style="left:708px;top:371.25px" width="11" height="11" viewBox="0 0 11 11"><rect x="0" y="0" width="11" height="11" fill="#fff"/><rect x="0.500" y="0.500" width="10" height="10" fill="none" stroke="#e4e4e4"/><path d="M2.500 4.500l3 3l3-3" stroke="#8a8a8a" stroke-width="1" fill="none"/></svg>
<div class="fl" style="left:735.5px;top:370px;">Job:</div>
<div class="fi" style="left:758px;top:371px;width:70.5px;height:11.5px;line-height:10.9px;"></div>
<svg class="a" style="left:817.5px;top:371.25px" width="11" height="11" viewBox="0 0 11 11"><rect x="0" y="0" width="11" height="11" fill="#fff"/><rect x="0.500" y="0.500" width="10" height="10" fill="none" stroke="#e4e4e4"/><path d="M2.500 4.500l3 3l3-3" stroke="#8a8a8a" stroke-width="1" fill="none"/></svg>
<div class="fl" style="left:835.5px;top:370px;">Lot:</div>
<div class="fi" style="left:858px;top:371px;width:117px;height:11.5px;line-height:10.9px;"></div>
<svg class="a" style="left:964px;top:371.25px" width="11" height="11" viewBox="0 0 11 11"><rect x="0" y="0" width="11" height="11" fill="#fff"/><rect x="0.500" y="0.500" width="10" height="10" fill="none" stroke="#e4e4e4"/><path d="M2.500 4.500l3 3l3-3" stroke="#8a8a8a" stroke-width="1" fill="none"/></svg>
<div class="fl" style="left:569.500px;top:388.500px;color:#38dc48;-webkit-text-stroke:0.3px #38dc48;font-size:8px;">CARD CAGE ASSEMBLY</div>
<div class="fl" style="left:564px;top:406.8px;">Stock Room:</div>
<div class="fi" style="left:621px;top:407.5px;width:61.5px;height:11.5px;line-height:10.9px;">VAR</div>
<svg class="a" style="left:671.5px;top:407.75px" width="11" height="11" viewBox="0 0 11 11"><rect x="0" y="0" width="11" height="11" fill="#fff"/><rect x="0.500" y="0.500" width="10" height="10" fill="none" stroke="#e4e4e4"/><path d="M2.500 4.500l3 3l3-3" stroke="#8a8a8a" stroke-width="1" fill="none"/></svg>
<div class="fl" style="left:691px;top:406.8px;">Location:</div>
<div class="fi" style="left:732px;top:407.5px;width:58px;height:11.5px;line-height:10.9px;">VAR</div>
<svg class="a" style="left:779px;top:407.75px" width="11" height="11" viewBox="0 0 11 11"><rect x="0" y="0" width="11" height="11" fill="#fff"/><rect x="0.500" y="0.500" width="10" height="10" fill="none" stroke="#e4e4e4"/><path d="M2.500 4.500l3 3l3-3" stroke="#8a8a8a" stroke-width="1" fill="none"/></svg>
<div class="fl" style="left:797px;top:406.8px;">Doc. ID:</div>
<div class="fi" style="left:831px;top:407.5px;width:88.5px;height:11.5px;line-height:10.9px;">WO71207</div>
<div class="fl" style="left:926.5px;top:406.8px;">Line:</div>
<div class="fi" style="left:949px;top:407.5px;width:26.5px;height:11.5px;line-height:10.9px;"></div>
<div class="fl" style="left:567.5px;top:428.3px;">Trans. ID:</div>
<div class="fi" style="left:620px;top:429px;width:53px;height:11.5px;line-height:10.9px;"><span class="lnk" style="color:#2368c4;-webkit-text-stroke:0;">392969</span></div>
<div class="fl" style="left:680px;top:428.3px;">Line:</div>
<div class="fi" style="left:702.5px;top:429px;width:27.5px;height:11.5px;line-height:10.9px;"><span class="lnk" style="color:#2368c4;-webkit-text-stroke:0;">1</span></div>
<div class="fl" style="left:737.5px;top:428.3px;">Date Created:</div>
<div class="fi" style="left:798px;top:429px;width:46.5px;height:11.5px;line-height:10.9px;"> 08-Sep-10</div>
<div class="fl" style="left:851.5px;top:428.3px;">By:</div>
<div class="fi" style="left:867.5px;top:429px;width:109.5px;height:11.5px;line-height:10.9px;">NATIONAL\DJOHNSON</div>
<div class="a" style="left:565px;top:459px;width:412.500px;height:66.500px;border:1px solid #c8c8c8;"></div>
<div class="fl" style="left:573px;top:452.500px;background:#505050;padding:0 2px;width:62px;">Notifications</div>
<div class="fi" style="left:569px;top:469.5px;width:189px;height:12px;line-height:11.4px;"></div>
<div class="fi" style="left:762.5px;top:469.5px;width:209.5px;height:12px;line-height:11.4px;"></div>
<div class="fi" style="left:569px;top:484.5px;width:403px;height:36px;line-height:35.4px;"></div>
<div class="a" style="left:462px;top:541.500px;width:522px;height:14.500px;background:#555;"></div>
<div class="t" style="left:465px;top:543px;font-size:9.250px;line-height:13px;color:#ecec0a;font-weight:bold;">Serial Number created by Transaction/Document!&nbsp; PN, S. Room and Location changes not allowd!</div>
<div class="a" style="left:462px;top:556px;width:522px;height:21.500px;background:#999;"></div>
<div class="a" style="left:463.500px;top:558px;width:116px;height:17px;background:#505050;color:#fff;font-size:9.100px;line-height:17.500px;padding-left:18px;white-space:nowrap;">New Failure Report</div>
<svg class="a" style="left:466.5px;top:561px" width="12" height="12" viewBox="0 0 12 12"><circle cx="6" cy="6" r="5.500" fill="#3cae49"/><path d="M6 3.500v5M3.500 6h5" stroke="#fff" stroke-width="1.300"/></svg>
<div class="a" style="left:462px;top:577px;width:522px;height:2px;background:#c0c0c4;"></div>
<div class="a" style="left:984px;top:579px;width:15.500px;height:1px;background:#f4f4f4;"></div>
</div>
</body></html>
